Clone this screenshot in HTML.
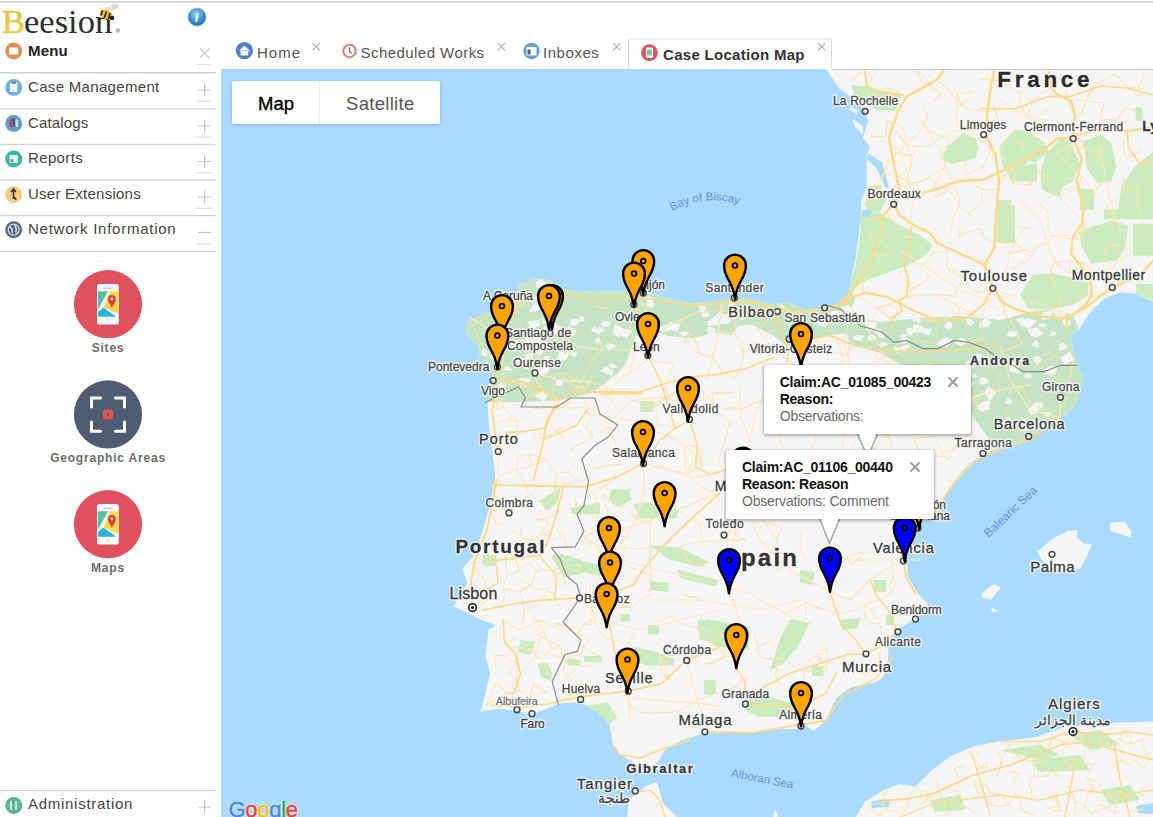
<!DOCTYPE html>
<html><head><meta charset="utf-8">
<style>
*{margin:0;padding:0;box-sizing:border-box}
html,body{width:1153px;height:817px;overflow:hidden;background:#fff;font-family:"Liberation Sans",sans-serif}
.abs{position:absolute}
#topline{left:0;top:1px;width:1153px;height:2px;background:#d8d8d8}
.mi{position:absolute;left:28px;color:#444;font-size:15px;letter-spacing:0.25px;white-space:nowrap}
.sep{position:absolute;left:0;width:216px;height:1px;background:#d2d2d2}
.ico{position:absolute;left:5px;width:17px;height:17px}
.pm{position:absolute;left:196px;width:16px;height:16px}
.ul{position:absolute;left:196px;width:16px;height:1px;background:#dcdcdc}
.tab{position:absolute;font-size:15px;color:#555;letter-spacing:0.3px;white-space:nowrap}
.blab{position:absolute;left:0;width:216px;text-align:center;font-size:12px;font-weight:bold;color:#6b6b6b;letter-spacing:0.8px}
#map{left:221px;top:69px;width:932px;height:748px;overflow:hidden;background:#aadaff}
.pop{position:absolute;background:#fff;border-radius:2px;box-shadow:0 1px 3px 1px rgba(0,0,0,.28);font-size:14px;line-height:17px;color:#222}
.pop b{font-weight:bold;color:#111;letter-spacing:-0.25px}
.pop .o{color:#6a6a6a;letter-spacing:-0.2px}
</style></head><body>
<div class="abs" id="topline"></div>

<!-- logo -->
<svg class="abs" style="left:0;top:0" width="130" height="40">
 <defs><linearGradient id="gb" x1="0" y1="0" x2="0" y2="1"><stop offset="0" stop-color="#e9b93a"/><stop offset="1" stop-color="#f7d634"/></linearGradient></defs>
 <text x="2" y="33.3" font-family="Liberation Serif" font-size="34.5" fill="url(#gb)" stroke="#e8c66a" stroke-width="0.6">B</text>
 <text x="24" y="33.3" font-family="Liberation Serif" font-size="34.5" fill="#2e2e2e">eesion</text>
 <circle cx="117.8" cy="30.4" r="2.3" fill="#bbb"/>
 <ellipse cx="112.5" cy="7.5" rx="6.5" ry="3" fill="#d8d8d8" transform="rotate(-20 112.5 7.5)"/>
 <ellipse cx="108" cy="9" rx="5" ry="2.5" fill="#e6e6e6" transform="rotate(-35 108 9)"/>
 <ellipse cx="106.5" cy="14.5" rx="7" ry="4.3" fill="#f2c21a" transform="rotate(28 106.5 14.5)"/>
 <path d="M102.5,10.5 L100.8,15.5 M106.5,11.5 L104.5,17.5 M110,13 L108.5,19" stroke="#222" stroke-width="1.7"/>
 <circle cx="112" cy="18" r="2.3" fill="#222"/>
</svg>
<svg class="abs" style="left:187px;top:7px" width="20" height="20">
 <defs><radialGradient id="gi" cx="0.45" cy="0.35" r="0.7"><stop offset="0" stop-color="#9fd0f5"/><stop offset="0.6" stop-color="#3b8bd0"/><stop offset="1" stop-color="#1f5f9c"/></radialGradient></defs>
 <circle cx="10" cy="10" r="9" fill="url(#gi)" stroke="#7fb0d8" stroke-width="0.8"/>
 <text x="8" y="15" font-size="12" font-style="italic" font-weight="bold" fill="#fff">i</text>
</svg>

<!-- sidebar -->
<svg class="abs" style="left:0;top:0" width="216" height="817">
 <!-- menu icon -->
 <circle cx="13.7" cy="51" r="8.5" fill="#e48f55"/><rect x="9.2" y="47.5" width="9" height="7" rx="1" fill="#fff"/>
 <circle cx="13.7" cy="87.5" r="8.5" fill="#6fafdf"/><rect x="10" y="82.5" width="7.4" height="9.5" rx="0.8" fill="#f3f3f3"/><rect x="11.5" y="81.8" width="4.4" height="2" fill="#8a7a66"/>
 <circle cx="13.7" cy="123.4" r="8.5" fill="#5d9fd6"/><rect x="9.5" y="119" width="2.6" height="8" fill="#c94040"/><rect x="12.5" y="118" width="2.6" height="9" fill="#3b5a8a"/><rect x="15.5" y="119.5" width="2.4" height="7.5" fill="#e8e0c0"/>
 <circle cx="13.7" cy="159" r="8.5" fill="#33bba0"/><rect x="9.5" y="155" width="8.4" height="8" fill="#e9f4f2"/><rect x="10.5" y="159" width="3" height="3" fill="#5aa0d0"/>
 <circle cx="13.7" cy="194.7" r="8.5" fill="#f5cd85"/><path d="M13.5,189 L13.5,199 M11,192 L13.5,189 L16,192 M13.5,196 L16,200" stroke="#3a3a3a" stroke-width="1.6" fill="none"/>
 <circle cx="13.7" cy="229.7" r="8.5" fill="#556680"/><circle cx="13.7" cy="229.7" r="5.5" fill="none" stroke="#dfe4ea" stroke-width="1.2"/><path d="M10,227 Q13,229 12,233 M15,225 Q17,229 16,233" stroke="#dfe4ea" stroke-width="1.5" fill="none"/>
 <circle cx="13.8" cy="805.4" r="8.5" fill="#5bb597"/><path d="M11,801 L11,810 M16,801 L16,810" stroke="#e6f3ee" stroke-width="1.5"/><rect x="9.8" y="804" width="2.4" height="2" fill="#e6f3ee"/><rect x="14.8" y="806" width="2.4" height="2" fill="#e6f3ee"/>

 <!-- x and + -->
 <g stroke="#c4c4c4" stroke-width="1.2" fill="none">
  <path d="M199.7,48.3 L209.5,58.1 M209.5,48.3 L199.7,58.1"/>
  <path d="M198,90 L211,90 M204.6,83.5 L204.6,96.5"/>
  <path d="M198,126 L211,126 M204.6,119.5 L204.6,132.5"/>
  <path d="M198,161.5 L211,161.5 M204.6,155 L204.6,168"/>
  <path d="M198,197 L211,197 M204.6,190.5 L204.6,203.5"/>
  <path d="M198,232.5 L211,232.5"/>
  <path d="M198,807 L211,807 M204.6,800.5 L204.6,813.5"/>
 </g>
 <g fill="#dedede">
  <rect x="196" y="64" width="16" height="1.2"/>
  <rect x="196" y="100.6" width="16" height="1.2"/>
  <rect x="196" y="136.4" width="16" height="1.2"/>
  <rect x="196" y="172" width="16" height="1.2"/>
  <rect x="196" y="207.6" width="16" height="1.2"/>
  <rect x="196" y="243.5" width="16" height="1.2"/>
 </g>
 <g fill="#d0d0d0">
  <rect x="0" y="72" width="216" height="1.6"/>
  <rect x="0" y="108.4" width="216" height="1.2"/>
  <rect x="0" y="143.8" width="216" height="1.2"/>
  <rect x="0" y="179.5" width="216" height="1.2"/>
  <rect x="0" y="215" width="216" height="1.2"/>
  <rect x="0" y="250.8" width="216" height="1.2"/>
  <rect x="0" y="790" width="216" height="1.2"/>
 </g>
 <!-- big icons -->
 <circle cx="108" cy="304.2" r="34.1" fill="#e0515f"/>
 <rect x="97" y="284.1" width="21.8" height="40.5" rx="2.6" fill="#fff"/>
 <rect x="103" y="287.6" width="10" height="1.4" rx="0.7" fill="#ccc"/>
 <polygon points="97.9,291.2 108.1,291.2 97.9,309.7" fill="#4fc0a6"/>
 <polygon points="109.8,291.2 118.4,291.2 118.4,314 103.7,307.5" fill="#fbdb52"/>
 <polygon points="97.9,316.7 116.4,316.7 103.3,307.6 97.9,312" fill="#2eb3d3"/>
 <path d="M111.9,308 C110.5,304.5 108,302.5 108,299 A3.9,3.9 0 1 1 115.8,299 C115.8,302.5 113.3,304.5 111.9,308Z" fill="#e23b3b"/>
 <circle cx="111.9" cy="299" r="1.4" fill="#fff"/>
 <circle cx="107.7" cy="320.4" r="1.8" fill="none" stroke="#bbb" stroke-width="0.7"/>

 <circle cx="108" cy="414.4" r="34.1" fill="#4f5d73"/>
 <g stroke="#fff" stroke-width="3" fill="none" stroke-linecap="round">
  <path d="M91.5,407 L91.5,398 L100.5,398"/>
  <path d="M115.5,398 L124.5,398 L124.5,407"/>
  <path d="M91.5,422 L91.5,431.2 L100.5,431.2"/>
  <path d="M115.5,431.2 L124.5,431.2 L124.5,422"/>
 </g>
 <rect x="103" y="409.6" width="10" height="10" rx="1.5" fill="#e05555"/>
 <circle cx="108" cy="414.6" r="1.3" fill="#4f5d73"/>

 <circle cx="108" cy="524.2" r="34.1" fill="#e0515f"/>
 <rect x="97" y="504.1" width="21.8" height="40.5" rx="2.6" fill="#fff"/>
 <rect x="103" y="507.6" width="10" height="1.4" rx="0.7" fill="#ccc"/>
 <polygon points="97.9,511.2 108.1,511.2 97.9,529.7" fill="#4fc0a6"/>
 <polygon points="109.8,511.2 118.4,511.2 118.4,534 103.7,527.5" fill="#fbdb52"/>
 <polygon points="97.9,536.7 116.4,536.7 103.3,527.6 97.9,532" fill="#2eb3d3"/>
 <path d="M111.9,528 C110.5,524.5 108,522.5 108,519 A3.9,3.9 0 1 1 115.8,519 C115.8,522.5 113.3,524.5 111.9,528Z" fill="#e23b3b"/>
 <circle cx="111.9" cy="519" r="1.4" fill="#fff"/>
 <circle cx="107.7" cy="540.4" r="1.8" fill="none" stroke="#bbb" stroke-width="0.7"/>
</svg>
<div class="mi" style="top:42px;font-weight:bold;color:#222;letter-spacing:0.2px">Menu</div>
<div class="mi" style="top:77.5px;letter-spacing:0.32px">Case Management</div>
<div class="mi" style="top:113.5px;letter-spacing:0.15px">Catalogs</div>
<div class="mi" style="top:148.5px;letter-spacing:0.36px">Reports</div>
<div class="mi" style="top:184.5px;letter-spacing:0.25px">User Extensions</div>
<div class="mi" style="top:219.5px;letter-spacing:0.75px">Network Information</div>
<div class="mi" style="top:794.5px;letter-spacing:0.72px">Administration</div>
<div class="blab" style="top:341px">Sites</div>
<div class="blab" style="top:451px">Geographic Areas</div>
<div class="blab" style="top:561px">Maps</div>

<!-- tabs -->
<svg class="abs" style="left:221px;top:30px" width="932" height="40">
 <circle cx="23.4" cy="20.7" r="8.6" fill="#4f7fcf"/><path d="M18.5,21 L23.4,16 L28.3,21 M20,20.5 L20,25 L26.8,25 L26.8,20.5" fill="#fff" stroke="#fff" stroke-width="1"/>
 <circle cx="128.5" cy="21" r="8.2" fill="#e3ddd0"/><circle cx="128.5" cy="21" r="6" fill="#fff" stroke="#d5766a" stroke-width="1.6"/><path d="M128.5,17.5 L128.5,21 L130.5,23.5" stroke="#555" stroke-width="1.2" fill="none"/>
 <circle cx="310.5" cy="21" r="8.2" fill="#5fa0d6"/><rect x="305.5" y="17" width="10" height="8.5" fill="#fff"/><rect x="306.5" y="19.5" width="3" height="5" fill="#556"/>
 <rect x="407.5" y="9" width="203" height="32" fill="#fff" stroke="#dadada" stroke-width="1"/>
 <circle cx="428.5" cy="22.7" r="8.4" fill="#e0515f"/><rect x="425" y="17.5" width="7" height="10.5" rx="1" fill="#fff"/><rect x="426" y="19.5" width="5" height="6" fill="#7cc6a0"/>
 <g stroke="#b5b5b5" stroke-width="1.1">
  <path d="M91.5,13 L99,20.5 M99,13 L91.5,20.5"/>
  <path d="M276.5,13 L284,20.5 M284,13 L276.5,20.5"/>
  <path d="M392,13 L399.5,20.5 M399.5,13 L392,20.5"/>
  <path d="M597,13 L604.5,20.5 M604.5,13 L597,20.5"/>
 </g>
</svg>
<div class="tab" style="left:257px;top:44px;letter-spacing:1px">Home</div>
<div class="tab" style="left:360.5px;top:44px;letter-spacing:0.45px">Scheduled Works</div>
<div class="tab" style="left:543px;top:44px;letter-spacing:0.55px">Inboxes</div>
<div class="tab" style="left:663px;top:45.5px;font-weight:bold;color:#333;letter-spacing:0.3px">Case Location Map</div>

<!-- map -->
<div class="abs" id="map">
<svg width="932" height="748" viewBox="221 69 932 748" style="position:absolute;left:0;top:0">
<rect x="221" y="69" width="932" height="748" fill="#aadaff"/>
<g fill="#f5f5f5">
<polygon points="826,69 1153,69 1153,301.8 1136,293.8 1120.2,292.2 1104.3,298.6 1088.4,314.5 1079,330 1071,334 1072.5,349 1077.6,366 1083,377 1080,392 1074,408 1060,418 1046,427 1027,439 1003,446 979.5,456 963,470 948,490 937,512 922,523 917,534 909,548 907,560 908,577 918,594 927.8,603.7 923,613.5 908,623 896,631 888.6,645 888,662 883,677 876.3,682 851.8,687 837,697.5 829.8,711.4 825.4,721 813.6,730.8 804,725 798,729 778.4,729 751,732.8 724.6,731 700,734.7 681,740.5 665,750 658.6,761 646,773.7 633.7,762.8 621,755 613,745.6 609.5,724.5 600,711.8 587.2,705.4 574.5,702.2 558.6,703.8 547.5,708.6 531.6,715 517.3,711 499.8,708.6 480.7,711.8 483.9,699 490.2,673.6 485.4,656 488.6,629 493.4,627.5 495,624.3 483.9,621 462.3,610.2 453.7,606.8 457.1,600 467.4,582.8 462.3,569 472.5,557 482.8,531.4 489.7,505.7 494.8,480 495,473 492,449 488.7,424 487.5,400 491,383 491,371 488,363 479,356 479,347 472.6,340.6 465.7,332 467.4,321.7 481,315 496.6,309.7 512,299.4 520,284 533.5,279.3 546,279.3 554.3,281.9 564.8,290.2 582.4,291.2 613.7,290.7 643,291.5 690,303.6 717.8,300.8 734.4,298 748.3,298 773.3,304.3 787,302.2 803.8,309 824.6,309 842.6,302.2 850,291 849.5,287.5 856,255.7 860.7,219 861.5,200 866.6,186.4 866.6,155.3 870,146.7 863,138 868.3,120.8 862,108 854,100 838,87"/>
<polygon points="627,817 629,799 637,794 646,786 657,782 660,792 663,803 677,817"/>
<polygon points="856,817 865,801.5 882,791 899,784 915.5,786.6 932,770 951,756 975,746 998,741.6 1036,737 1065,727 1093,725 1117,722.6 1153,721.4 1153,817"/>
<polygon points="1037,551.4 1054,537.7 1068,530.9 1078,530 1076.6,537.7 1083.4,542.9 1092,544.6 1086.8,556.6 1080,568.6 1066,572 1045.7,565 1040.6,558"/>
<polygon points="1110,523 1124.5,521.4 1131,531 1131,537.7 1121,534 1110,531"/>
<polygon points="982,592.6 994,584 1001,587.4 991,599.4 982,597.7"/>
<polygon points="991,607 998,611 992,612"/>
<polygon points="773,817 775,809 778,817"/>
<polygon points="850.5,107 858,110 857,114 849,110"/>
<polygon points="852.8,119 863,126 863,134.6 854.5,126"/>
</g>
<g fill="#c5e4c4">
<polygon points="487.5,400 491,383 491,371 488,363 479,356 479,347 472.6,340.6 465.7,332 467.4,321.7 481,315 496.6,309.7 512,299.4 520,284 533.5,279.3 546,279.3 554.3,281.9 564.8,290.2 582.4,291.2 613.7,290.7 643,291.5 690,303.6 717.8,300.8 734.4,298 748.3,298 773.3,304.3 787,302.2 803.8,309 824.6,309 842.6,302.2 850,291 849.5,287.5 855,298 848,320 850,332.7 828.8,335.5 815,338.3 787,346.6 773.3,335.5 762.2,330 752.4,324.4 738.6,325.8 731.6,335.5 717.8,332.7 690,338.3 669,336 647,329.5 636,336 625,365 614,376 592,393 559,400 526,402 482,402"/>
<polygon points="842,315 860,318 880,322 920,318 960,316 1000,320 1030,312 1047,309.7 1072.5,314.5 1079,330 1071,334 1072.5,349 1077.6,366 1083,377 1080,392 1074,408 1060,418 1046,427 1027,439 1003,446 990,440 975,420 962,398 950,372 900,364 880,353 850,345"/>
</g>
<g fill="#caebbe">
<polygon points="860.7,211 879.8,212.7 894,222.3 903.6,227 919.5,235 932.2,244.5 929,252.5 916.3,260.4 895.7,270 871.8,278 855.9,286 849.5,295.4 846.4,298.6 856,263.6 860.7,231.8"/>
<polygon points="866.6,186.4 880.4,184.6 885.6,200.2 880,212 866,212"/>
<polygon points="851,84.5 864.9,86.3 885.6,91.4 901,96.6 896,110.4 877,110.4 854.5,94.9"/>
<polygon points="947.7,146.7 963.3,132.9 975.3,138 978.8,148.4 975.3,158.7 951.2,164 940.8,158.7"/>
<polygon points="999,146.7 1014.5,129.4 1028.3,131.2 1043.9,141.5 1049,151.9 1035.2,162.2 1028.3,160.5 1014.5,179.5 1014.5,184.7 1002.4,165.7"/>
<polygon points="1045.6,155.3 1061,138 1069.8,141.5 1080,164 1073.2,181.2 1062.9,186.4 1059.4,196.8 1042,189.9 1040.4,172.6"/>
<polygon points="1014.5,169.1 1037,162.2 1037,181.2 1014.5,181.2"/>
<polygon points="1083.6,141.5 1100.9,134.6 1111.2,143.2 1116.4,165.7 1111.2,181.2 1097.4,183 1087,169.1"/>
<polygon points="1135.4,165.7 1153,151.9 1153,210 1118,210 1121.6,186.4"/>
<polygon points="1135.4,107 1142.3,107 1142.3,120.8 1136,120.8"/>
<polygon points="1080,188 1094,190 1094,210 1080,210"/>
<polygon points="997,200 1011,200 1011,210 997,210"/>
<polygon points="996,205 1015,205 1015,243 996,243"/>
<polygon points="1078.9,231.8 1094.8,225.4 1113.9,220.7 1128.2,225.4 1125,247.7 1117,260.4 1091.6,263.6 1082,247.7"/>
<polygon points="1104,209.5 1153,209.5 1153,219 1104,219"/>
<polygon points="1133,223.9 1153,223.9 1153,255.7 1133,255.7"/>
<polygon points="1032.8,274.8 1053.4,273.2 1088.4,282.7 1088.4,295.4 1072.5,305 1047,309.7 1028,308 1020,295.4"/>
<polygon points="1136,284 1153,284 1153,301 1136,293.8"/>
<polygon points="611,489.2 629.4,489.2 631.2,500.2 618.4,507.6 609.2,500.2"/>
<polygon points="633,504 650,502 679,510 676,518.6 640,518"/>
<polygon points="640.4,401 653.3,401 653.3,412 640.4,412"/>
<polygon points="539.4,500.6 560,488.6 558.2,502.3 546.2,510.8"/>
<polygon points="482.8,553.7 496.5,556 496.5,565.7 482.8,565.7"/>
<polygon points="551.3,555.4 560,553.7 600,565.7 600,576 585.6,572.5 563.3,577.6"/>
<polygon points="570,507.4 600,503 600,514.3 572,514.3"/>
<polygon points="649,545 680,548 709,562 700,567 670,560"/>
<polygon points="560,561 579,566 575,574 560,572"/>
<polygon points="650,581 668.4,583 668.4,592 650,590"/>
<polygon points="677.6,570 718,580 716,586.5 680,578"/>
<polygon points="633.5,647 651.8,650.8 673.9,658.2 673.9,665.5 646.3,665.5 637,661.8"/>
<polygon points="648.2,625 659.2,625 659.2,634.3 648.2,634.3"/>
<polygon points="699.6,617.8 720,635 720,647 705,640"/>
<polygon points="705,680 714,680 714,695 705,695"/>
<polygon points="620.6,614 629.8,614 629.8,621.4 620.6,621.4"/>
<polygon points="567.3,658 580.2,660 580.2,665.5 567.3,665.5"/>
<polygon points="583.9,656.3 602.2,656.3 602.2,661.8 583.9,661.8"/>
<polygon points="705.9,619.2 749,627 749,648.6 715.7,646.6 708,636"/>
<polygon points="809.7,623 790,619.2 778.4,642.7 770.5,670 782.3,664.2 798,646.6"/>
<polygon points="745,699.5 770,697 798,705 795,717 760,717 745,710"/>
<polygon points="811.7,666.2 823.4,666.2 823.4,676 811.7,676"/>
<polygon points="704,680 715.7,680 715.7,693.6 704,693.6"/>
<polygon points="874,580 886,580 886,591.8 874,591.8"/>
<polygon points="886,615 894,615 894,625 886,625"/>
<polygon points="537.9,664 547.5,662.5 552.2,673.6 550.6,681.6 541,676.8"/>
<polygon points="569.7,661 581,661 581,664 569.7,664"/>
<polygon points="587,656 600,656 600,661 587,661"/>
<polygon points="587.2,705.4 608,702.2 617.5,718 609,724 596,712"/>
<polygon points="697,620 725,622 720,643 700,640"/>
<polygon points="840,620 860,618 858,628 842,630"/>
<polygon points="800,570 815,572 812,585 800,583"/>
<polygon points="520,640 535,642 530,655 518,652"/>
<polygon points="1000,750 1040,745 1060,755 1040,760"/>
<polygon points="1030,760 1080,755 1090,770 1040,772"/>
<polygon points="1070,735 1100,730 1120,745 1090,750"/>
<polygon points="1100,790 1130,785 1140,800 1110,805"/>
<polygon points="930,800 960,795 965,810 935,812"/>
</g>
<g fill="#f5f5f5">
<polygon points="541.2,343.3 532.1,345.6 528.8,340.7 543.5,339.2"/>
<polygon points="744.0,318.5 742.7,320.2 739.5,319.2 739.4,316.1 743.2,316.8"/>
<polygon points="609.7,363.7 611.7,363.1 618.3,366.9 615.4,367.7 612.0,368.6 608.1,366.3"/>
<polygon points="683.6,331.6 688.6,332.2 688.7,335.1 681.3,337.0 681.1,334.2 678.0,332.6"/>
<polygon points="543.9,359.8 543.8,356.4 547.9,355.9 550.9,356.0 547.6,359.2"/>
<polygon points="536.0,365.1 543.1,367.8 544.8,374.3 531.7,373.9"/>
<polygon points="618.0,337.5 612.7,332.5 615.1,324.0 623.3,328.5 621.6,334.2"/>
<polygon points="539.8,325.7 531.2,329.2 527.3,321.2 539.3,319.8"/>
<polygon points="655.0,324.0 649.3,325.8 648.0,322.1 651.5,319.1"/>
<polygon points="827.2,317.9 825.4,326.8 817.4,325.2 817.0,318.7"/>
<polygon points="494.7,350.9 504.1,355.7 499.4,361.0 493.9,360.4 489.2,356.3"/>
<polygon points="551.1,360.4 556.7,362.4 561.1,365.2 557.1,368.2 551.2,367.7 550.3,365.9"/>
<polygon points="568.4,353.0 567.1,359.3 556.5,361.7 559.3,351.7"/>
<polygon points="830.4,312.7 833.3,310.8 839.3,311.1 838.9,315.4 835.6,317.0"/>
<polygon points="566.0,352.2 572.8,350.8 577.7,353.2 575.2,357.3 572.2,356.3"/>
<polygon points="732.0,299.7 735.6,302.1 732.2,307.9 726.7,303.2"/>
<polygon points="558.9,333.9 547.8,333.0 542.9,327.9 554.1,322.1 560.6,326.9"/>
<polygon points="549.5,365.1 549.6,369.4 546.6,375.2 539.8,368.4 542.4,365.9 545.7,364.8"/>
<polygon points="598.5,334.0 594.9,332.8 598.5,326.6 605.3,330.0"/>
<polygon points="526.8,349.3 524.4,340.8 530.1,334.6 536.7,339.4 536.8,344.9"/>
<polygon points="671.2,330.0 662.8,332.6 657.5,328.1 662.3,325.9 668.0,324.2 676.5,328.7"/>
<polygon points="509.0,331.9 507.4,332.5 505.4,330.1 507.1,328.2 510.9,328.8"/>
<polygon points="513.5,340.1 519.1,341.1 514.5,345.1 509.0,342.0"/>
<polygon points="553.8,301.2 558.1,308.0 553.2,308.9 547.0,307.5 543.9,302.9 547.9,303.3"/>
<polygon points="746.1,310.3 748.8,307.9 751.6,309.4 751.9,313.5 746.6,313.9"/>
<polygon points="714.2,318.2 720.5,324.7 707.9,326.0 707.4,321.1"/>
<polygon points="539.1,299.8 532.6,302.7 529.2,300.4 529.3,296.9 533.3,296.9 538.6,297.5"/>
<polygon points="540.3,333.7 539.4,338.5 535.2,341.4 527.8,332.2 537.5,329.9"/>
<polygon points="540.8,355.2 533.8,352.9 537.3,348.8 543.3,349.0 543.2,352.1"/>
<polygon points="541.0,304.5 543.1,296.7 551.3,295.8 551.4,304.3 544.4,307.3"/>
<polygon points="677.0,331.7 669.1,329.6 667.0,327.2 671.0,321.5 681.1,323.7 679.6,326.6"/>
<polygon points="581.4,320.2 576.0,326.0 570.6,325.3 570.2,319.7 574.8,318.5"/>
<polygon points="644.6,298.0 648.9,296.4 654.2,297.7 653.1,301.8 646.7,304.3 646.2,300.6"/>
<polygon points="715.7,328.2 714.5,335.8 707.2,334.8 707.9,325.9"/>
<polygon points="849.9,304.8 851.2,310.5 846.7,312.7 839.7,313.4 840.8,308.2 843.9,306.4"/>
<polygon points="612.9,370.1 613.0,376.3 599.4,371.0 605.1,366.8"/>
<polygon points="573.8,336.7 566.8,331.0 567.8,325.5 576.6,330.7"/>
<polygon points="598.8,336.6 601.3,341.9 596.1,343.2 594.8,339.5"/>
<polygon points="518.0,379.0 525.1,378.0 532.0,378.4 528.7,383.5 521.7,385.3"/>
<polygon points="727.5,320.2 726.4,313.4 735.8,312.4 736.6,318.4"/>
<polygon points="719.4,312.0 731.9,317.8 729.5,323.6 720.2,323.9 710.9,319.6"/>
<polygon points="602.2,321.2 607.0,321.0 611.5,322.8 608.5,325.9 601.8,327.4"/>
<polygon points="779.0,304.5 783.1,305.3 785.6,307.8 781.6,308.0"/>
<polygon points="500.3,354.0 503.9,356.7 501.3,359.0 497.2,360.5 496.1,357.6 495.7,354.3"/>
<polygon points="493.2,357.2 490.7,355.7 493.2,353.9 494.8,354.0 498.5,354.4 494.2,357.0"/>
<polygon points="530.7,360.8 525.0,357.9 525.1,355.7 532.5,352.0 532.8,356.6"/>
<polygon points="541.2,308.1 545.5,302.6 556.3,305.0 556.8,310.2 551.6,312.9 545.8,314.1"/>
<polygon points="506.3,384.8 503.3,388.7 495.2,387.7 500.9,382.4"/>
<polygon points="530.0,297.8 530.3,301.4 525.9,300.5 523.5,298.3 523.8,294.5"/>
<polygon points="521.3,292.1 528.7,291.6 529.7,296.8 526.0,299.2 519.0,298.5 517.4,295.1"/>
<polygon points="551.7,346.1 549.3,350.0 540.2,345.7 544.6,344.0"/>
<polygon points="527.9,361.5 525.7,363.0 518.1,364.4 514.2,361.9 511.9,358.3 523.0,358.3"/>
<polygon points="707.7,310.8 708.4,313.9 709.9,315.8 706.8,317.8 701.8,317.2 701.7,312.9"/>
<polygon points="544.5,284.7 542.2,287.2 535.8,287.7 536.1,281.9 542.0,279.0 545.7,283.0"/>
<polygon points="591.3,328.3 595.6,326.6 597.2,330.1 596.0,331.6 591.9,331.2"/>
<polygon points="540.2,318.4 549.6,318.3 549.3,321.9 543.3,323.7"/>
<polygon points="541.7,390.9 547.8,395.6 543.8,401.2 534.0,395.4"/>
<polygon points="550.7,348.1 563.9,345.3 562.1,350.4 555.7,351.9"/>
<polygon points="533.4,347.8 537.4,344.8 542.2,345.2 539.0,349.2"/>
<polygon points="525.6,330.9 525.0,329.2 527.0,327.9 529.0,329.1 529.4,330.6 526.8,332.4"/>
<polygon points="622.2,336.0 617.4,334.8 620.6,328.9 627.3,329.1 632.4,331.7 626.8,338.1"/>
<polygon points="563.6,382.5 561.6,386.1 556.1,385.6 556.2,379.8 562.7,379.0"/>
<polygon points="609.1,350.8 605.4,345.9 609.5,343.5 617.6,345.4"/>
<polygon points="583.2,317.1 584.2,319.4 584.8,321.9 579.5,320.7 579.8,316.1"/>
<polygon points="653.5,301.3 654.0,305.5 652.1,308.7 646.4,305.3 646.7,303.5 650.2,302.7"/>
<polygon points="509.5,367.0 512.5,371.0 506.8,370.5 503.4,369.5 505.9,366.0"/>
<polygon points="529.3,312.1 531.9,306.4 536.0,301.8 541.4,308.0 537.7,310.9"/>
<polygon points="480.4,353.8 482.0,350.7 484.5,349.0 489.0,351.9 486.0,356.9"/>
<polygon points="812.6,318.1 821.3,314.7 823.4,319.9 818.6,321.3"/>
<polygon points="704.3,305.5 706.4,307.9 704.2,311.8 699.7,311.9 698.1,305.5"/>
<polygon points="1050.0,332.0 1056.3,331.8 1054.8,334.8 1050.6,337.1"/>
<polygon points="981.6,411.9 975.9,406.0 983.0,403.4 989.7,408.4"/>
<polygon points="881.5,342.1 884.6,341.8 888.0,344.8 883.9,346.3 880.7,346.8 878.8,345.6"/>
<polygon points="966.3,324.0 965.8,317.3 971.4,319.6 974.9,322.0 970.7,326.0"/>
<polygon points="1069.1,362.6 1061.2,360.7 1060.6,357.6 1067.4,354.6 1070.3,355.5 1069.5,360.9"/>
<polygon points="935.3,344.4 943.4,338.3 950.7,342.5 945.5,348.0"/>
<polygon points="971.2,368.0 969.6,366.6 972.2,363.5 974.9,366.7 973.7,368.2"/>
<polygon points="1070.3,351.7 1074.1,360.2 1069.0,363.1 1064.4,365.0 1062.0,358.0 1065.0,354.2"/>
<polygon points="866.6,338.2 871.3,333.8 876.3,337.6 876.1,340.0 869.5,340.6"/>
<polygon points="898.9,353.4 894.4,350.8 893.7,345.7 899.0,348.4"/>
<polygon points="1051.3,385.8 1048.1,388.0 1043.4,386.8 1044.9,383.2"/>
<polygon points="909.4,326.9 915.6,330.5 910.7,335.9 906.7,333.5 906.2,329.3"/>
<polygon points="1058.7,351.1 1059.4,347.9 1058.5,344.7 1062.9,342.2 1067.6,347.2 1065.1,348.9"/>
<polygon points="1060.1,308.8 1064.5,314.2 1058.8,320.1 1052.9,312.1"/>
<polygon points="1060.7,317.5 1058.2,317.0 1058.5,313.9 1060.9,312.1 1066.7,314.7 1065.1,315.7"/>
<polygon points="1050.4,412.3 1048.9,414.2 1049.1,416.7 1044.8,415.9 1044.0,413.9 1045.2,412.1"/>
<polygon points="1006.2,422.5 1004.7,420.2 1006.4,417.4 1010.5,418.0 1010.9,419.8"/>
<polygon points="1029.3,373.2 1032.6,376.8 1027.9,378.6 1023.7,376.5 1026.0,373.3"/>
<polygon points="1029.9,424.6 1027.5,428.3 1024.2,428.4 1019.0,424.6 1019.9,418.1 1028.3,418.9"/>
<polygon points="900.5,348.0 901.3,346.5 905.5,345.0 910.2,343.9 908.7,348.1 907.3,348.4"/>
<polygon points="967.1,375.9 968.0,372.9 974.4,373.4 978.3,376.8 974.0,378.3"/>
<polygon points="1056.8,367.0 1056.7,371.4 1053.0,375.3 1044.6,373.8 1045.8,368.3 1051.4,365.4"/>
<polygon points="919.2,324.1 915.4,321.9 912.3,320.0 916.5,318.2 921.6,319.3"/>
<polygon points="908.8,335.0 902.4,337.7 899.9,336.4 901.9,333.5"/>
<polygon points="1037.7,405.9 1039.7,408.1 1036.6,413.4 1031.0,414.8 1027.9,411.5 1029.7,407.6"/>
<polygon points="1037.1,364.6 1032.4,358.9 1035.3,356.5 1040.0,357.0 1041.4,361.2"/>
<polygon points="922.3,333.6 923.7,328.3 932.2,328.9 929.9,334.7"/>
<polygon points="1006.5,335.4 1008.3,332.1 1009.3,330.6 1017.4,331.6 1017.2,333.9 1013.4,336.9"/>
<polygon points="1019.9,373.2 1009.1,371.7 1010.1,362.6 1019.3,362.8"/>
<polygon points="967.4,369.4 972.8,367.3 972.0,373.2 964.7,374.6"/>
<polygon points="960.2,338.1 965.1,339.3 964.8,343.7 961.1,346.1 954.2,342.8 956.7,340.1"/>
<polygon points="1027.3,427.5 1027.9,431.2 1025.2,431.3 1022.8,430.0 1021.4,426.7"/>
<polygon points="1046.7,326.6 1043.3,327.5 1039.0,326.6 1038.5,323.1 1046.3,323.8"/>
<polygon points="1034.8,402.4 1042.9,402.7 1042.8,406.4 1039.5,409.2 1031.2,407.3"/>
<polygon points="858.1,334.7 864.2,336.1 860.8,341.3 856.6,340.6 851.8,337.2"/>
<polygon points="865.3,319.9 878.2,323.0 873.0,331.3 865.5,330.1"/>
<polygon points="1005.1,404.0 1006.2,400.4 1008.5,397.2 1012.3,401.4 1010.9,404.1"/>
<polygon points="980.6,402.2 990.1,400.6 988.9,410.4 980.3,408.1"/>
<polygon points="951.7,339.6 947.1,345.8 938.3,342.5 945.2,337.4"/>
<polygon points="1020.2,317.2 1025.0,318.4 1026.1,321.7 1021.8,322.9 1018.8,323.2 1016.0,319.4"/>
<polygon points="1032.7,325.5 1029.7,328.4 1019.8,325.6 1022.7,319.6 1028.5,318.2 1037.3,320.7"/>
<polygon points="971.9,364.4 975.4,368.0 965.1,369.8 962.9,367.3 964.8,363.9 969.7,358.9"/>
<polygon points="996.7,427.7 993.9,425.0 997.0,423.5 1000.4,424.6 1001.5,426.4"/>
<polygon points="1064.0,319.1 1071.0,321.1 1069.7,325.9 1063.5,325.3 1062.1,321.6"/>
<polygon points="968.3,382.3 975.2,381.5 971.6,387.7 964.8,385.3"/>
<polygon points="991.7,322.2 988.4,327.1 980.0,327.6 978.6,322.9 985.6,318.2"/>
<polygon points="858.1,319.7 857.6,322.2 855.4,324.3 852.2,323.8 852.5,321.5"/>
<polygon points="880.3,332.0 877.3,334.3 872.9,330.7 872.8,328.4 881.8,328.7"/>
<polygon points="948.1,321.0 951.7,322.7 952.1,327.9 948.5,329.7 944.6,326.9 944.9,324.4"/>
<polygon points="923.3,326.4 925.4,332.1 911.5,333.6 913.5,324.2"/>
<polygon points="979.0,378.3 983.0,376.4 987.3,379.3 989.4,382.7 984.9,383.9 979.9,384.4"/>
<polygon points="1031.1,345.5 1035.2,340.2 1039.3,343.1 1038.6,347.5"/>
<polygon points="1049.8,318.4 1042.2,320.6 1040.8,315.1 1043.0,312.1 1053.0,310.4 1051.9,315.1"/>
<polygon points="878.7,332.1 884.1,334.5 884.5,338.2 881.1,337.8 877.6,336.9"/>
<polygon points="903.8,351.4 897.2,348.3 902.3,346.8 907.5,350.7"/>
<polygon points="1040.1,330.8 1044.3,333.1 1035.7,338.1 1029.9,335.0 1027.3,329.4 1037.4,327.2"/>
<polygon points="980.9,360.3 979.4,361.4 974.8,359.3 972.7,355.6 978.5,353.1 982.2,354.9"/>
<polygon points="999.1,425.0 1002.5,421.3 1014.7,421.8 1011.0,428.0 1009.8,429.4 1003.8,428.0"/>
<polygon points="909.8,340.5 902.9,344.0 899.9,341.2 903.3,335.9"/>
<polygon points="988.0,385.7 996.0,392.4 990.1,401.3 984.3,393.1"/>
</g>
<g fill="#aadaff">
<polygon points="871,801 890,799 889,807 872,808"/>
<polygon points="1136,806 1153,803 1153,814 1138,813"/>
<polygon points="868.3,153.6 882,162.2 889,188 885.6,188 877,169 866.6,158.7"/>
<polygon points="862,209.5 872,211 870,217.5 862,216"/>
</g>
<path fill="none" stroke="#fbe4ac" stroke-width="0.9" d="M852.3,79.5 Q857.1,77.3 862.1,70.2 M862.1,70.2 Q858.1,73.8 852.3,79.5 M869.1,84.0 Q872.9,75.9 876.9,71.6 M867.7,96.3 Q867.5,88.1 869.1,84.0 M867.7,96.3 Q877.8,90.6 888.0,87.1 M869.8,135.9 Q879.1,138.5 885.2,136.3 M871.5,191.0 Q876.9,190.5 877.3,191.1 M871.5,191.0 Q869.5,196.4 863.1,206.1 M871.5,191.0 Q875.5,183.5 883.6,173.5 M863.1,206.1 Q869.6,196.7 871.5,191.0 M863.1,206.1 Q871.8,198.7 877.3,191.1 M867.4,227.7 Q870.0,230.4 870.5,235.8 M870.5,235.8 Q874.6,241.0 882.3,241.6 M870.5,235.8 Q873.4,242.5 874.3,250.2 M874.3,250.2 Q875.1,252.2 876.7,255.4 M874.3,250.2 Q876.4,245.0 882.3,241.6 M865.7,276.9 Q865.4,281.4 861.7,289.8 M865.7,276.9 Q874.5,273.1 878.9,267.1 M861.7,289.8 Q862.5,281.2 865.7,276.9 M861.7,289.8 Q868.9,293.9 877.3,294.1 M888.0,87.1 Q895.0,91.2 899.3,91.7 M888.0,87.1 Q887.8,91.3 889.7,100.2 M888.0,87.1 Q892.1,95.4 894.6,102.2 M889.7,100.2 Q890.9,100.0 894.6,102.2 M889.7,100.2 Q894.6,94.3 899.3,91.7 M887.0,121.4 Q885.7,126.5 885.2,136.3 M887.0,121.4 Q895.7,123.1 901.8,125.9 M885.2,136.3 Q887.2,126.6 887.0,121.4 M885.2,136.3 Q877.2,137.4 869.8,135.9 M889.2,160.8 Q893.3,158.9 897.6,152.7 M889.2,160.8 Q884.7,166.7 883.6,173.5 M883.6,173.5 Q885.4,168.4 889.2,160.8 M883.6,173.5 Q893.7,174.0 898.8,176.9 M877.3,191.1 Q880.7,181.8 883.6,173.5 M886.3,212.5 Q888.3,213.5 888.9,218.7 M886.3,212.5 Q891.6,218.7 896.9,221.8 M888.9,218.7 Q892.1,221.6 896.9,221.8 M876.7,255.4 Q874.6,252.1 874.3,250.2 M876.7,255.4 Q879.4,259.8 878.9,267.1 M878.9,267.1 Q877.4,260.8 876.7,255.4 M894.6,102.2 Q897.0,97.6 899.3,91.7 M901.8,125.9 Q905.8,133.6 905.9,142.6 M905.9,142.6 Q910.8,138.1 916.4,135.5 M905.9,142.6 Q904.1,145.7 897.6,152.7 M905.9,142.6 Q908.5,150.7 911.9,156.1 M897.6,152.7 Q893.4,154.6 889.2,160.8 M897.6,152.7 Q903.9,149.8 905.9,142.6 M897.6,152.7 Q904.9,154.2 911.9,156.1 M898.8,176.9 Q902.1,177.8 908.0,182.7 M898.8,176.9 Q906.3,180.8 913.5,182.8 M908.0,182.7 Q908.7,184.2 913.5,182.8 M908.0,182.7 Q909.9,190.8 915.6,198.2 M896.0,200.9 Q890.1,204.8 886.3,212.5 M896.9,221.8 Q892.6,221.6 888.9,218.7 M902.4,235.4 Q907.3,236.6 911.9,236.9 M893.4,254.8 Q882.5,255.3 876.7,255.4 M893.4,254.8 Q886.7,247.2 882.3,241.6 M899.0,274.0 Q904.7,266.5 910.7,261.7 M907.9,292.9 Q912.1,289.3 914.2,287.7 M907.9,292.9 Q918.9,285.9 929.9,277.2 M918.2,70.8 Q917.3,73.6 920.7,79.2 M918.2,70.8 Q928.6,82.1 940.3,93.5 M920.7,79.2 Q918.8,74.5 918.2,70.8 M920.7,79.2 Q928.0,85.3 940.3,93.5 M924.1,107.3 Q924.9,113.0 928.7,113.9 M923.7,124.6 Q927.6,117.7 928.7,113.9 M923.7,124.6 Q928.0,127.8 932.6,133.4 M916.4,135.5 Q920.7,130.6 923.7,124.6 M911.9,156.1 Q902.5,154.9 897.6,152.7 M911.3,164.4 Q909.3,157.8 911.9,156.1 M911.3,164.4 Q904.6,171.7 898.8,176.9 M913.5,182.8 Q912.7,183.9 908.0,182.7 M913.5,182.8 Q923.2,182.6 927.7,177.9 M913.5,182.8 Q913.7,188.9 915.6,198.2 M915.6,198.2 Q911.2,189.8 908.0,182.7 M910.4,216.7 Q910.8,205.3 915.6,198.2 M911.9,236.9 Q905.2,238.5 902.4,235.4 M910.7,261.7 Q916.9,264.3 919.7,267.6 M919.7,267.6 Q925.0,272.1 929.9,277.2 M919.7,267.6 Q924.6,262.0 931.3,254.0 M914.2,287.7 Q921.6,284.0 929.9,277.2 M914.2,287.7 Q904.3,278.5 899.0,274.0 M940.3,93.5 Q935.2,96.6 934.5,102.8 M934.5,102.8 Q939.4,97.3 940.3,93.5 M928.7,113.9 Q923.9,120.5 923.7,124.6 M932.6,133.4 Q927.1,130.1 923.7,124.6 M932.6,133.4 Q940.7,136.9 947.8,137.3 M940.0,148.8 Q942.5,146.4 949.8,146.8 M927.7,177.9 Q932.7,180.1 935.4,182.6 M927.7,177.9 Q922.1,182.5 913.5,182.8 M927.7,177.9 Q937.8,170.9 944.8,167.6 M935.4,182.6 Q937.1,191.4 935.7,197.8 M935.4,182.6 Q943.5,188.2 948.3,190.9 M935.7,197.8 Q941.1,193.4 948.3,190.9 M935.4,229.3 Q938.1,235.1 940.6,242.0 M940.6,242.0 Q942.9,244.7 947.7,251.8 M931.3,254.0 Q934.2,247.6 940.6,242.0 M931.3,254.0 Q937.5,250.7 947.7,251.8 M935.5,294.3 Q945.8,294.9 953.9,296.1 M956.8,93.4 Q959.5,101.4 962.6,105.5 M956.8,93.4 Q955.7,100.7 957.4,107.7 M956.8,93.4 Q965.5,93.3 971.3,90.6 M957.4,107.7 Q959.0,106.9 962.6,105.5 M956.9,123.7 Q955.6,114.4 957.4,107.7 M947.8,137.3 Q947.7,144.1 949.8,146.8 M944.8,167.6 Q938.7,176.7 935.4,182.6 M944.8,167.6 Q944.9,156.2 940.0,148.8 M948.3,190.9 Q940.6,194.1 935.7,197.8 M948.3,190.9 Q955.6,196.2 959.0,204.2 M959.0,204.2 Q961.7,210.4 967.5,211.8 M958.7,229.5 Q963.2,230.9 963.3,233.7 M958.7,229.5 Q960.7,232.9 959.0,236.9 M959.0,236.9 Q962.5,236.1 963.3,233.7 M947.4,268.5 Q945.2,262.7 947.7,251.8 M947.4,268.5 Q953.1,274.4 963.6,278.0 M953.9,296.1 Q946.3,294.7 935.5,294.3 M953.9,296.1 Q958.1,287.7 963.6,278.0 M962.6,105.5 Q957.8,104.5 957.4,107.7 M962.6,105.5 Q967.2,98.7 971.3,90.6 M975.3,124.3 Q981.6,125.0 986.4,126.6 M972.8,136.7 Q973.6,129.4 975.3,124.3 M972.8,136.7 Q977.9,142.0 985.0,142.7 M964.1,158.4 Q966.5,169.0 966.4,175.6 M966.4,175.6 Q973.2,183.5 976.2,186.4 M976.2,186.4 Q979.9,187.3 982.0,189.3 M967.5,211.8 Q969.6,212.6 972.4,217.0 M972.4,217.0 Q969.5,216.3 967.5,211.8 M963.3,233.7 Q959.2,233.0 959.0,236.9 M963.3,233.7 Q973.4,230.4 980.4,228.3 M975.2,260.7 Q982.4,259.8 987.3,262.2 M963.6,278.0 Q957.6,271.2 947.4,268.5 M963.6,278.0 Q969.9,286.8 976.3,292.4 M976.3,292.4 Q980.2,293.2 986.0,290.5 M976.3,292.4 Q978.2,288.0 984.8,279.4 M980.4,78.6 Q993.4,79.3 1002.1,81.2 M993.2,105.3 Q995.0,108.3 995.4,107.6 M993.2,105.3 Q996.2,113.0 998.0,119.6 M986.4,126.6 Q979.2,124.0 975.3,124.3 M986.4,126.6 Q991.7,123.2 998.0,119.6 M985.0,142.7 Q987.3,144.3 991.0,149.6 M985.0,142.7 Q980.5,138.1 972.8,136.7 M985.0,142.7 Q987.7,136.4 986.4,126.6 M991.0,149.6 Q987.1,145.6 985.0,142.7 M982.2,167.8 Q975.0,170.7 966.4,175.6 M982.2,167.8 Q987.0,158.3 991.0,149.6 M982.0,189.3 Q981.9,194.1 982.3,203.8 M982.3,203.8 Q976.5,209.5 967.5,211.8 M980.4,228.3 Q981.6,231.1 983.8,238.4 M983.8,238.4 Q982.9,231.0 980.4,228.3 M983.8,238.4 Q992.0,242.8 1003.9,243.0 M984.8,279.4 Q986.2,286.4 986.0,290.5 M984.8,279.4 Q983.8,271.4 987.3,262.2 M1002.1,81.2 Q1009.8,88.5 1019.7,92.8 M1002.1,81.2 Q992.2,81.0 980.4,78.6 M995.4,107.6 Q993.0,105.5 993.2,105.3 M995.4,107.6 Q997.3,115.7 998.0,119.6 M998.0,119.6 Q994.3,121.6 986.4,126.6 M1006.4,137.9 Q1012.8,138.5 1020.9,143.8 M1000.3,154.3 Q994.5,151.1 991.0,149.6 M1000.3,154.3 Q1002.8,147.6 1006.4,137.9 M1003.8,175.3 Q1007.1,172.9 1014.2,170.1 M1003.8,175.3 Q1009.3,179.0 1013.5,184.0 M997.0,188.9 Q998.3,195.7 999.2,201.6 M997.0,188.9 Q987.5,191.6 982.0,189.3 M997.0,188.9 Q1001.1,181.6 1003.8,175.3 M999.2,201.6 Q1008.8,205.0 1013.5,207.6 M1007.2,222.1 Q1009.5,212.7 1013.5,207.6 M1007.2,222.1 Q1014.4,225.7 1024.3,228.1 M1003.9,243.0 Q1008.3,242.7 1014.7,242.3 M1009.3,255.1 Q1009.1,249.5 1003.9,243.0 M1009.3,255.1 Q1012.8,247.8 1014.7,242.3 M1004.7,273.1 Q1008.3,262.7 1009.3,255.1 M1003.2,292.9 Q1010.0,294.6 1015.7,296.9 M1003.2,292.9 Q996.6,289.8 986.0,290.5 M1019.7,92.8 Q1026.3,95.0 1031.8,102.0 M1019.7,92.8 Q1019.1,101.1 1023.0,108.8 M1023.0,108.8 Q1022.9,111.8 1026.8,116.3 M1023.0,108.8 Q1026.0,105.8 1031.8,102.0 M1026.8,116.3 Q1032.6,116.8 1037.2,117.5 M1020.9,143.8 Q1020.6,147.7 1025.2,148.4 M1020.9,143.8 Q1027.7,138.8 1032.3,134.2 M1025.2,148.4 Q1024.9,147.6 1020.9,143.8 M1014.2,170.1 Q1011.4,170.5 1003.8,175.3 M1014.2,170.1 Q1015.8,177.6 1013.5,184.0 M1014.2,170.1 Q1007.8,162.3 1000.3,154.3 M1013.5,184.0 Q1015.9,174.7 1014.2,170.1 M1013.5,184.0 Q1021.7,184.2 1029.6,185.4 M1013.5,207.6 Q1008.3,215.4 1007.2,222.1 M1024.3,228.1 Q1025.5,227.2 1030.3,229.4 M1024.3,228.1 Q1019.6,235.9 1014.7,242.3 M1014.7,242.3 Q1007.1,243.3 1003.9,243.0 M1014.7,242.3 Q1021.1,247.6 1022.5,250.5 M1022.5,250.5 Q1027.8,249.0 1031.0,252.4 M1022.5,250.5 Q1019.8,246.2 1014.7,242.3 M1022.5,250.5 Q1015.6,251.4 1009.3,255.1 M1025.9,280.2 Q1026.7,279.4 1030.0,277.3 M1044.5,91.1 Q1037.0,96.8 1031.8,102.0 M1044.5,91.1 Q1051.4,88.2 1058.9,82.3 M1031.8,102.0 Q1031.3,107.0 1026.8,116.3 M1032.3,134.2 Q1038.1,138.9 1040.4,146.6 M1037.8,170.1 Q1042.0,175.7 1047.5,177.7 M1037.8,170.1 Q1036.2,179.5 1029.6,185.4 M1029.6,185.4 Q1033.9,175.2 1037.8,170.1 M1029.6,185.4 Q1036.1,183.9 1047.5,177.7 M1038.9,205.2 Q1043.6,206.8 1047.6,210.5 M1038.9,205.2 Q1046.0,199.5 1056.1,192.6 M1030.3,229.4 Q1025.7,226.4 1024.3,228.1 M1031.0,252.4 Q1034.4,246.9 1041.4,246.2 M1033.5,284.3 Q1032.9,278.6 1030.0,277.3 M1052.8,75.3 Q1054.3,81.1 1058.9,82.3 M1052.8,75.3 Q1058.6,79.2 1064.1,81.4 M1058.9,82.3 Q1059.5,80.4 1064.1,81.4 M1048.6,109.4 Q1043.6,112.4 1037.2,117.5 M1047.7,130.2 Q1050.4,125.8 1055.1,123.1 M1056.9,152.9 Q1061.5,148.6 1068.7,146.6 M1056.9,152.9 Q1063.1,157.5 1067.2,163.6 M1047.5,177.7 Q1043.2,173.8 1037.8,170.1 M1047.5,177.7 Q1050.7,186.4 1056.1,192.6 M1056.1,192.6 Q1058.8,198.7 1066.2,204.6 M1056.1,192.6 Q1065.2,188.4 1074.6,188.8 M1047.6,210.5 Q1044.9,208.2 1038.9,205.2 M1047.4,227.6 Q1047.8,230.5 1053.3,236.5 M1047.4,227.6 Q1048.8,221.4 1047.6,210.5 M1053.3,236.5 Q1049.0,243.8 1041.4,246.2 M1053.3,236.5 Q1065.1,239.6 1075.9,238.0 M1054.8,262.5 Q1050.9,266.5 1050.4,267.3 M1054.8,262.5 Q1065.1,260.5 1070.9,261.1 M1050.4,267.3 Q1050.6,265.6 1054.8,262.5 M1050.4,267.3 Q1050.3,278.1 1054.4,286.0 M1054.4,286.0 Q1051.7,276.2 1050.4,267.3 M1064.1,81.4 Q1062.8,81.5 1058.9,82.3 M1064.1,81.4 Q1057.8,77.4 1052.8,75.3 M1064.1,81.4 Q1065.8,91.0 1068.1,100.0 M1068.1,100.0 Q1070.9,110.4 1075.0,116.8 M1068.1,100.0 Q1076.0,100.1 1086.5,100.7 M1075.0,116.8 Q1077.3,114.7 1081.2,114.3 M1071.0,132.1 Q1078.1,136.1 1081.4,140.7 M1071.0,132.1 Q1068.9,139.2 1068.7,146.6 M1068.7,146.6 Q1060.9,149.5 1056.9,152.9 M1068.7,146.6 Q1077.0,142.3 1081.4,140.7 M1067.2,163.6 Q1069.2,156.8 1068.7,146.6 M1074.6,188.8 Q1079.2,184.9 1081.6,176.2 M1074.6,188.8 Q1080.8,195.4 1084.7,201.1 M1066.2,204.6 Q1071.1,208.7 1077.7,216.0 M1077.7,216.0 Q1079.5,219.5 1084.8,221.4 M1075.9,238.0 Q1078.7,240.5 1082.8,238.2 M1075.9,238.0 Q1081.9,230.9 1084.8,221.4 M1070.9,261.1 Q1075.7,264.2 1084.4,263.1 M1069.4,273.1 Q1070.0,264.6 1070.9,261.1 M1069.4,273.1 Q1061.8,266.4 1054.8,262.5 M1069.4,273.1 Q1079.3,267.0 1084.4,263.1 M1073.9,297.4 Q1077.2,297.8 1084.1,297.1 M1085.6,74.1 Q1085.9,79.8 1091.2,88.1 M1085.6,74.1 Q1093.3,80.2 1097.4,84.2 M1085.6,74.1 Q1075.6,79.5 1064.1,81.4 M1091.2,88.1 Q1095.2,86.9 1097.4,84.2 M1086.5,100.7 Q1087.6,95.4 1091.2,88.1 M1086.5,100.7 Q1082.5,107.0 1081.2,114.3 M1081.2,114.3 Q1083.5,107.3 1086.5,100.7 M1081.4,140.7 Q1082.9,145.6 1084.3,148.8 M1081.4,140.7 Q1078.2,135.5 1071.0,132.1 M1084.3,148.8 Q1080.8,143.5 1081.4,140.7 M1084.3,148.8 Q1090.1,151.8 1098.7,152.5 M1084.3,148.8 Q1074.9,147.0 1068.7,146.6 M1081.6,176.2 Q1079.2,182.6 1074.6,188.8 M1081.6,176.2 Q1088.4,185.1 1093.7,190.6 M1081.6,176.2 Q1074.0,172.2 1067.2,163.6 M1093.7,190.6 Q1100.3,185.6 1102.0,183.9 M1093.7,190.6 Q1091.4,197.0 1084.7,201.1 M1084.7,201.1 Q1089.9,194.6 1093.7,190.6 M1082.8,238.2 Q1080.0,239.0 1075.9,238.0 M1082.8,238.2 Q1084.2,227.8 1084.8,221.4 M1084.4,263.1 Q1077.8,260.7 1070.9,261.1 M1084.4,263.1 Q1091.3,267.8 1095.2,273.7 M1095.2,273.7 Q1087.6,269.9 1084.4,263.1 M1095.2,273.7 Q1102.3,271.4 1112.4,267.6 M1084.1,297.1 Q1077.2,298.1 1073.9,297.4 M1084.1,297.1 Q1097.9,296.2 1108.4,292.2 M1097.4,84.2 Q1090.0,94.1 1086.5,100.7 M1104.6,103.0 Q1101.1,112.6 1100.4,120.1 M1104.6,103.0 Q1098.0,102.8 1086.5,100.7 M1100.4,120.1 Q1109.6,119.1 1116.5,120.4 M1100.4,120.1 Q1101.2,110.5 1104.6,103.0 M1097.4,133.4 Q1098.8,127.4 1100.4,120.1 M1097.4,133.4 Q1100.1,141.2 1098.7,152.5 M1098.7,152.5 Q1096.1,159.8 1098.0,163.7 M1098.7,152.5 Q1092.9,148.8 1084.3,148.8 M1098.0,163.7 Q1099.0,155.6 1098.7,152.5 M1102.0,183.9 Q1096.6,185.2 1093.7,190.6 M1106.3,205.4 Q1113.9,200.0 1117.9,197.8 M1106.3,205.4 Q1111.1,214.1 1116.4,219.9 M1108.8,224.4 Q1114.7,223.6 1116.4,219.9 M1108.3,244.8 Q1113.0,246.5 1116.0,244.1 M1103.3,253.3 Q1104.3,250.1 1108.3,244.8 M1103.3,253.3 Q1109.8,250.0 1116.0,244.1 M1112.4,267.6 Q1119.0,269.7 1123.9,275.8 M1112.4,267.6 Q1115.7,262.4 1122.9,258.0 M1112.4,267.6 Q1107.7,260.8 1103.3,253.3 M1108.4,292.2 Q1115.0,285.5 1121.8,282.4 M1108.4,292.2 Q1116.1,284.0 1123.9,275.8 M1108.4,292.2 Q1103.7,280.4 1095.2,273.7 M1115.0,74.1 Q1121.3,81.4 1128.0,87.9 M1115.0,74.1 Q1107.9,78.5 1097.4,84.2 M1128.0,87.9 Q1136.1,88.1 1139.0,86.5 M1128.0,87.9 Q1133.1,91.4 1141.4,96.4 M1128.0,87.9 Q1119.1,78.7 1115.0,74.1 M1125.6,107.8 Q1119.0,114.0 1116.5,120.4 M1125.6,107.8 Q1135.4,110.2 1142.6,116.2 M1116.5,120.4 Q1122.1,114.7 1125.6,107.8 M1122.1,142.1 Q1126.5,139.2 1132.5,133.4 M1122.1,142.1 Q1124.6,152.7 1126.7,159.0 M1123.3,177.0 Q1125.7,182.9 1124.8,191.0 M1124.8,191.0 Q1122.9,184.0 1123.3,177.0 M1124.8,191.0 Q1134.3,189.4 1138.9,186.2 M1117.9,197.8 Q1120.5,193.5 1124.8,191.0 M1116.4,219.9 Q1109.2,215.2 1106.3,205.4 M1116.0,244.1 Q1114.1,244.7 1108.3,244.8 M1116.0,244.1 Q1117.1,250.0 1122.9,258.0 M1122.9,258.0 Q1129.9,255.0 1133.6,252.2 M1122.9,258.0 Q1115.4,262.8 1112.4,267.6 M1123.9,275.8 Q1123.5,280.1 1121.8,282.4 M1123.9,275.8 Q1119.1,270.2 1112.4,267.6 M1123.9,275.8 Q1132.8,278.9 1140.0,282.5 M1121.8,282.4 Q1120.9,277.5 1123.9,275.8 M1143.6,72.8 Q1142.1,79.0 1139.0,86.5 M1139.0,86.5 Q1141.7,91.8 1141.4,96.4 M1142.5,149.5 Q1136.0,153.8 1126.7,159.0 M1138.9,186.2 Q1140.7,181.8 1142.7,178.3 M1138.7,207.8 Q1139.4,214.0 1143.1,223.8 M1138.7,207.8 Q1136.3,194.5 1138.9,186.2 M1138.7,207.8 Q1129.8,201.8 1124.8,191.0 M1141.2,232.5 Q1140.2,225.7 1143.1,223.8 M1133.6,252.2 Q1126.9,247.5 1116.0,244.1 M1142.7,270.0 Q1139.3,276.9 1140.0,282.5 M1142.7,270.0 Q1133.1,275.1 1123.9,275.8 M1140.0,282.5 Q1143.5,274.0 1142.7,270.0 M462.0,594.1 Q465.2,593.3 468.4,588.4 M473.6,562.8 Q476.8,570.8 480.8,576.2 M473.6,562.8 Q484.1,562.6 491.3,561.5 M480.8,576.2 Q484.5,578.8 485.0,579.6 M468.4,588.4 Q474.8,581.8 480.8,576.2 M475.5,605.5 Q483.1,604.3 488.4,598.6 M473.0,614.1 Q474.0,608.4 475.5,605.5 M473.0,614.1 Q477.5,614.6 483.7,618.2 M473.0,614.1 Q481.0,606.7 488.4,598.6 M494.8,391.6 Q499.2,394.9 500.7,399.7 M495.7,409.9 Q501.5,406.8 503.3,406.4 M495.7,409.9 Q497.9,406.7 500.7,399.7 M494.9,423.3 Q499.3,420.8 508.0,420.6 M495.0,500.9 Q500.1,504.4 504.8,509.6 M495.0,500.9 Q502.2,501.9 508.2,503.5 M491.2,511.1 Q492.6,505.4 495.0,500.9 M491.2,511.1 Q498.4,509.7 504.8,509.6 M491.2,511.1 Q495.5,519.9 495.7,527.0 M495.7,527.0 Q497.3,524.6 502.5,523.3 M484.6,544.3 Q494.5,548.4 500.9,548.4 M484.6,544.3 Q487.8,552.6 491.3,561.5 M491.3,561.5 Q499.6,561.4 506.2,559.2 M491.3,561.5 Q494.3,554.3 500.9,548.4 M485.0,579.6 Q484.4,578.0 480.8,576.2 M485.0,579.6 Q484.7,589.9 487.8,596.7 M487.8,596.7 Q489.5,599.9 488.4,598.6 M487.8,596.7 Q481.3,599.5 475.5,605.5 M488.4,598.6 Q486.8,599.4 487.8,596.7 M483.7,618.2 Q478.8,615.5 473.0,614.1 M492.8,634.8 Q499.4,627.3 504.2,624.2 M494.7,655.3 Q498.7,656.3 504.6,655.6 M494.9,666.9 Q494.3,659.3 494.7,655.3 M495.7,682.8 Q501.9,686.7 506.6,693.3 M486.4,704.5 Q497.7,699.2 506.6,693.3 M486.4,704.5 Q492.7,695.4 495.7,682.8 M486.4,704.5 Q502.7,695.8 518.9,690.4 M510.7,380.1 Q514.2,382.6 518.4,388.5 M510.7,380.1 Q516.9,384.1 526.2,385.8 M500.7,399.7 Q499.9,401.2 503.3,406.4 M503.3,406.4 Q502.5,404.5 500.7,399.7 M503.3,406.4 Q506.6,412.6 514.3,416.4 M508.0,420.6 Q509.5,417.3 514.3,416.4 M508.0,420.6 Q511.8,418.9 517.6,421.4 M511.0,446.0 Q514.5,444.1 514.8,438.2 M499.1,455.7 Q504.3,450.6 511.0,446.0 M498.6,475.7 Q498.0,479.2 501.7,485.2 M498.6,475.7 Q506.7,473.7 515.7,469.3 M498.6,475.7 Q496.8,463.7 499.1,455.7 M508.2,503.5 Q513.5,502.6 515.3,498.9 M504.8,509.6 Q506.1,505.5 508.2,503.5 M504.8,509.6 Q512.4,511.3 516.6,508.6 M500.9,548.4 Q504.4,554.2 506.2,559.2 M506.2,559.2 Q508.3,561.0 514.7,559.4 M507.1,574.6 Q512.0,574.6 519.8,570.3 M507.1,574.6 Q504.9,567.1 506.2,559.2 M503.3,588.5 Q504.4,582.2 507.1,574.6 M503.3,588.5 Q505.4,595.6 503.3,603.4 M503.3,588.5 Q513.6,590.4 520.2,591.8 M510.6,640.3 Q512.0,637.8 514.9,638.4 M504.6,655.6 Q505.0,656.9 509.0,660.4 M504.6,655.6 Q497.9,655.2 494.7,655.3 M509.0,660.4 Q512.2,661.9 516.8,661.5 M509.5,674.3 Q513.6,676.8 516.5,678.5 M509.5,674.3 Q513.0,666.6 516.8,661.5 M506.6,693.3 Q513.5,693.9 518.9,690.4 M506.6,693.3 Q501.6,687.8 495.7,682.8 M506.6,693.3 Q513.7,686.1 516.5,678.5 M526.2,385.8 Q528.7,382.5 530.2,381.9 M526.2,385.8 Q520.6,387.2 518.4,388.5 M526.2,385.8 Q530.4,389.4 534.2,395.1 M518.4,388.5 Q520.2,388.1 526.2,385.8 M518.4,388.5 Q522.1,386.2 530.2,381.9 M514.3,416.4 Q517.2,417.7 517.6,421.4 M514.8,438.2 Q514.0,440.7 511.0,446.0 M514.8,438.2 Q517.2,427.9 517.6,421.4 M517.7,458.2 Q524.2,455.0 528.8,453.8 M515.7,469.3 Q518.3,463.6 517.7,458.2 M515.7,469.3 Q524.4,468.1 532.0,465.7 M515.7,469.3 Q522.1,478.7 525.3,484.2 M525.3,484.2 Q526.2,490.7 531.4,495.6 M525.3,484.2 Q533.2,484.1 539.6,485.3 M515.3,498.9 Q516.8,503.6 516.6,508.6 M515.3,498.9 Q509.6,506.1 504.8,509.6 M521.0,527.3 Q521.5,535.0 524.1,541.8 M524.1,541.8 Q532.3,539.1 538.5,540.6 M514.7,559.4 Q518.4,563.3 519.8,570.3 M519.8,570.3 Q517.8,566.9 514.7,559.4 M520.2,591.8 Q526.6,588.6 532.4,583.4 M523.9,610.7 Q522.7,619.6 520.8,624.5 M523.9,610.7 Q529.0,609.2 537.6,605.3 M523.9,610.7 Q523.8,602.9 520.2,591.8 M520.8,624.5 Q524.5,618.4 523.9,610.7 M514.9,638.4 Q511.4,641.2 510.6,640.3 M526.4,649.1 Q528.8,651.6 532.1,651.9 M516.5,678.5 Q516.9,684.5 518.9,690.4 M516.5,678.5 Q517.5,671.5 516.8,661.5 M518.9,690.4 Q518.5,683.2 516.5,678.5 M518.9,690.4 Q514.3,693.1 506.6,693.3 M518.9,690.4 Q524.4,692.4 530.0,697.2 M534.2,395.1 Q529.1,388.4 526.2,385.8 M535.1,409.2 Q545.6,407.0 554.8,408.1 M535.1,409.2 Q526.3,415.2 517.6,421.4 M538.9,431.0 Q539.3,435.4 544.2,438.1 M532.1,438.1 Q536.4,432.9 538.9,431.0 M532.1,438.1 Q539.1,438.5 544.2,438.1 M528.8,453.8 Q531.8,459.9 532.0,465.7 M532.0,465.7 Q528.8,461.9 528.8,453.8 M532.0,465.7 Q540.8,462.1 546.6,459.5 M531.4,495.6 Q533.4,492.2 539.6,485.3 M536.4,519.4 Q539.2,519.7 544.7,518.1 M536.4,519.4 Q542.6,519.8 549.3,523.6 M540.3,533.1 Q545.1,527.4 549.3,523.6 M538.5,540.6 Q537.3,536.7 540.3,533.1 M530.1,562.3 Q531.5,567.5 536.7,570.8 M530.1,562.3 Q525.2,564.5 519.8,570.3 M536.7,570.8 Q533.8,576.5 532.4,583.4 M536.7,570.8 Q542.3,569.7 551.6,570.5 M532.4,583.4 Q535.3,575.2 536.7,570.8 M532.4,583.4 Q524.2,587.1 520.2,591.8 M537.6,605.3 Q541.1,598.6 547.5,590.7 M539.6,625.6 Q544.2,631.7 546.8,639.6 M535.2,632.9 Q536.9,629.9 539.6,625.6 M535.2,632.9 Q540.4,635.0 546.8,639.6 M532.1,651.9 Q528.6,652.0 526.4,649.1 M532.1,651.9 Q535.4,653.6 541.0,659.5 M541.0,659.5 Q545.6,663.9 546.5,664.2 M541.0,659.5 Q546.4,652.9 551.8,649.5 M533.8,683.6 Q532.5,688.8 530.0,697.2 M533.8,683.6 Q538.5,686.1 545.7,691.9 M530.0,697.2 Q528.8,703.8 531.6,710.9 M530.0,697.2 Q530.5,691.4 533.8,683.6 M556.6,373.7 Q560.9,372.3 568.5,374.7 M556.6,373.7 Q563.2,381.1 573.9,386.5 M556.6,373.7 Q552.7,382.7 552.7,396.0 M552.7,396.0 Q558.1,396.6 559.9,400.2 M552.7,396.0 Q552.9,401.8 554.8,408.1 M554.8,408.1 Q557.7,404.0 559.9,400.2 M554.8,408.1 Q560.4,407.3 565.6,406.3 M555.8,431.3 Q560.7,431.1 561.3,427.3 M555.8,431.3 Q561.8,437.1 564.5,438.6 M555.8,431.3 Q550.6,436.1 544.2,438.1 M544.2,438.1 Q540.8,435.2 538.9,431.0 M546.6,459.5 Q539.2,463.2 532.0,465.7 M546.6,459.5 Q550.2,465.9 555.6,473.8 M546.6,459.5 Q535.6,455.2 528.8,453.8 M555.6,473.8 Q562.1,471.6 566.8,472.6 M555.6,473.8 Q555.5,481.9 555.0,486.0 M555.6,473.8 Q560.3,478.9 566.3,486.4 M555.0,486.0 Q554.7,489.9 555.4,497.2 M555.0,486.0 Q559.2,488.0 566.3,486.4 M555.0,486.0 Q555.5,478.2 555.6,473.8 M555.4,497.2 Q557.7,500.4 558.7,506.4 M555.4,497.2 Q556.1,490.4 555.0,486.0 M544.7,518.1 Q545.8,521.2 549.3,523.6 M544.7,518.1 Q551.9,516.0 559.0,513.2 M549.3,523.6 Q547.8,522.2 544.7,518.1 M554.1,540.1 Q560.5,537.5 563.7,534.6 M554.1,540.1 Q548.3,534.9 540.3,533.1 M551.6,570.5 Q557.3,574.2 562.6,573.7 M551.6,570.5 Q557.4,568.4 565.9,566.6 M547.5,590.7 Q553.0,592.6 556.1,598.5 M556.1,598.5 Q556.1,603.9 560.2,607.4 M556.1,598.5 Q551.6,592.9 547.5,590.7 M555.8,623.2 Q559.1,625.9 563.0,625.0 M555.8,623.2 Q562.0,627.5 567.2,628.4 M546.8,639.6 Q551.2,646.2 551.8,649.5 M551.8,649.5 Q555.2,649.2 559.7,645.8 M551.8,649.5 Q550.4,642.3 546.8,639.6 M546.5,664.2 Q546.7,670.4 548.0,674.5 M548.0,674.5 Q545.2,669.8 546.5,664.2 M545.7,691.9 Q538.0,689.7 533.8,683.6 M545.7,691.9 Q536.8,693.2 530.0,697.2 M568.5,374.7 Q573.4,380.3 573.9,386.5 M568.5,374.7 Q578.8,381.7 586.4,388.8 M559.9,400.2 Q554.9,398.3 552.7,396.0 M565.6,406.3 Q563.5,404.8 559.9,400.2 M565.6,406.3 Q559.1,409.4 554.8,408.1 M561.3,427.3 Q556.4,428.6 555.8,431.3 M561.3,427.3 Q561.3,432.9 564.5,438.6 M564.5,438.6 Q558.1,433.5 555.8,431.3 M571.1,448.5 Q573.9,451.2 573.7,449.6 M571.1,448.5 Q577.3,446.1 581.7,444.1 M566.3,486.4 Q569.7,483.1 576.4,478.8 M558.7,506.4 Q557.4,509.1 559.0,513.2 M563.7,534.6 Q563.6,541.9 567.9,549.6 M563.7,534.6 Q554.4,527.5 549.3,523.6 M565.9,566.6 Q559.1,566.9 551.6,570.5 M562.6,573.7 Q566.1,571.9 565.9,566.6 M565.8,587.6 Q565.4,581.2 562.6,573.7 M563.0,625.0 Q566.4,625.5 567.2,628.4 M563.0,625.0 Q557.8,622.2 555.8,623.2 M567.2,628.4 Q565.2,627.3 563.0,625.0 M567.2,628.4 Q571.5,631.6 577.1,634.4 M559.7,645.8 Q554.0,644.4 546.8,639.6 M559.7,645.8 Q562.4,653.4 562.6,661.0 M562.6,661.0 Q563.4,651.8 559.7,645.8 M567.3,676.3 Q572.3,680.3 578.2,685.3 M567.3,676.3 Q574.1,672.9 578.5,665.7 M567.3,676.3 Q563.4,669.6 562.6,661.0 M563.9,693.6 Q571.7,694.4 577.3,694.7 M563.9,693.6 Q573.0,688.7 578.2,685.3 M573.9,386.5 Q580.5,385.7 586.4,388.8 M586.4,388.8 Q579.5,388.9 573.9,386.5 M586.4,388.8 Q589.2,384.0 592.8,375.8 M584.9,411.6 Q590.8,412.9 593.6,415.7 M585.6,426.7 Q587.0,427.8 590.4,431.1 M585.6,426.7 Q587.0,430.6 592.6,437.6 M574.9,463.4 Q569.9,468.0 566.8,472.6 M576.4,478.8 Q573.7,476.2 566.8,472.6 M574.8,497.9 Q576.1,501.3 575.5,509.1 M575.5,509.1 Q577.0,502.2 574.8,497.9 M586.2,535.7 Q583.7,537.5 585.4,539.4 M586.2,535.7 Q593.3,533.2 599.5,528.0 M585.4,539.4 Q583.8,537.2 586.2,535.7 M585.4,539.4 Q589.9,542.9 598.5,545.3 M581.2,565.8 Q582.4,570.0 579.2,575.2 M581.2,565.8 Q575.2,564.1 565.9,566.6 M579.2,575.2 Q580.5,572.7 581.2,565.8 M585.2,595.6 Q585.9,599.7 591.0,606.5 M581.0,602.0 Q582.5,598.2 585.2,595.6 M583.2,623.2 Q587.8,624.3 592.0,624.6 M583.2,623.2 Q580.9,629.3 577.1,634.4 M577.1,634.4 Q580.7,630.2 583.2,623.2 M582.6,646.2 Q587.3,644.3 589.5,639.8 M582.6,646.2 Q582.7,655.7 578.5,665.7 M578.5,665.7 Q584.5,666.3 591.9,666.8 M577.3,694.7 Q576.2,690.6 578.2,685.3 M592.8,375.8 Q590.1,380.6 586.4,388.8 M595.6,401.3 Q593.2,410.5 593.6,415.7 M593.6,415.7 Q590.9,415.3 584.9,411.6 M593.6,415.7 Q589.8,420.5 585.6,426.7 M590.4,431.1 Q593.2,433.1 592.6,437.6 M592.6,437.6 Q591.0,433.1 590.4,431.1 M592.6,437.6 Q585.0,441.6 581.7,444.1 M591.2,464.0 Q592.3,461.4 591.9,460.1 M588.5,485.7 Q583.1,481.0 576.4,478.8 M588.5,485.7 Q591.4,490.7 596.4,497.9 M596.4,497.9 Q596.0,506.3 597.1,515.2 M597.1,515.2 Q597.4,523.9 599.5,528.0 M599.5,528.0 Q594.1,533.9 586.2,535.7 M598.5,545.3 Q591.0,541.6 585.4,539.4 M601.6,562.4 Q600.5,553.6 598.5,545.3 M600.9,573.9 Q603.0,566.8 601.6,562.4 M597.3,585.1 Q597.0,580.7 600.9,573.9 M591.0,606.5 Q588.2,603.3 581.0,602.0 M591.0,606.5 Q589.7,617.7 592.0,624.6 M589.5,639.8 Q581.5,635.6 577.1,634.4 M600.7,656.7 Q592.6,653.2 582.6,646.2 M591.9,666.8 Q596.7,660.4 600.7,656.7 M593.8,689.6 Q595.6,687.1 596.8,682.7 M593.8,689.6 Q584.0,689.2 578.2,685.3 M589.8,380.9 Q606.3,394.2 620.6,411.9 M589.8,380.9 Q611.6,387.6 632.8,400.6 M610.7,427.0 Q610.5,432.7 615.3,440.9 M610.7,427.0 Q614.9,415.9 620.6,411.9 M600.6,430.4 Q602.7,432.0 610.7,427.0 M600.6,430.4 Q611.8,439.1 615.3,440.9 M593.5,468.9 Q605.6,465.3 620.9,464.0 M603.1,495.1 Q616.5,503.5 623.9,505.5 M603.1,495.1 Q605.0,506.2 611.5,520.7 M611.5,520.7 Q615.4,512.9 623.9,505.5 M607.9,556.7 Q616.2,558.7 623.3,563.8 M607.9,556.7 Q616.7,548.7 624.2,546.9 M590.1,583.0 Q590.6,602.0 593.5,614.0 M608.3,609.0 Q618.9,607.6 632.1,606.9 M593.5,614.0 Q599.6,610.5 608.3,609.0 M593.5,614.0 Q596.1,628.9 604.8,638.7 M604.8,638.7 Q618.7,640.9 629.2,643.9 M594.6,686.9 Q594.5,688.9 592.9,691.4 M592.9,691.4 Q590.2,689.8 594.6,686.9 M632.8,400.6 Q623.8,406.9 620.6,411.9 M632.8,400.6 Q643.2,402.5 655.8,406.3 M632.8,400.6 Q649.4,396.5 663.5,397.6 M620.6,411.9 Q627.9,403.1 632.8,400.6 M615.3,440.9 Q615.0,450.4 620.9,464.0 M620.9,464.0 Q604.2,466.2 593.5,468.9 M623.9,505.5 Q628.4,506.5 631.7,514.6 M631.7,514.6 Q641.6,523.1 650.7,523.9 M624.2,546.9 Q624.0,553.4 623.3,563.8 M623.3,563.8 Q615.5,562.5 607.9,556.7 M632.1,606.9 Q643.2,598.5 651.3,594.3 M632.1,606.9 Q617.5,606.1 608.3,609.0 M629.2,643.9 Q629.5,641.7 633.1,633.3 M626.0,687.4 Q629.6,695.2 630.5,707.4 M630.5,707.4 Q636.9,712.5 641.8,713.1 M630.5,707.4 Q624.9,695.4 626.0,687.4 M663.5,397.6 Q671.8,392.1 672.5,393.7 M663.5,397.6 Q661.2,404.4 655.8,406.3 M655.8,406.3 Q656.4,404.0 663.5,397.6 M655.8,406.3 Q664.9,397.6 672.5,393.7 M654.8,431.1 Q658.8,418.0 655.8,406.3 M654.8,431.1 Q669.2,435.3 685.0,445.8 M657.1,465.8 Q669.7,470.1 687.9,474.2 M653.4,498.3 Q665.0,497.8 672.4,502.0 M653.4,498.3 Q653.5,512.8 650.7,523.9 M650.7,523.9 Q643.5,519.1 631.7,514.6 M651.0,547.8 Q649.5,532.5 650.7,523.9 M651.0,547.8 Q634.2,550.2 624.2,546.9 M651.0,547.8 Q647.7,560.6 651.4,575.4 M651.4,575.4 Q650.0,559.0 651.0,547.8 M651.4,575.4 Q638.7,571.6 623.3,563.8 M651.3,594.3 Q649.5,586.4 651.4,575.4 M653.1,621.2 Q664.0,621.3 671.1,616.3 M659.6,656.8 Q666.7,658.0 674.9,654.1 M659.6,656.8 Q662.3,667.6 660.6,672.6 M660.6,672.6 Q667.2,676.9 669.9,679.8 M660.6,672.6 Q661.2,661.3 659.6,656.8 M641.8,713.1 Q638.9,708.2 630.5,707.4 M641.8,713.1 Q656.8,713.3 670.5,712.5 M672.5,393.7 Q671.4,398.7 663.5,397.6 M672.5,393.7 Q675.6,401.1 685.6,406.0 M685.6,406.0 Q678.4,396.6 672.5,393.7 M685.6,406.0 Q677.2,400.6 663.5,397.6 M685.0,445.8 Q695.1,444.3 700.8,450.5 M685.0,445.8 Q693.6,452.1 702.3,465.9 M685.0,445.8 Q683.4,462.5 687.9,474.2 M687.9,474.2 Q694.4,468.5 702.3,465.9 M687.9,474.2 Q695.6,483.0 708.7,491.1 M687.9,474.2 Q691.1,461.5 700.8,450.5 M672.4,502.0 Q661.3,496.9 653.4,498.3 M672.4,502.0 Q677.6,510.8 686.4,516.4 M686.4,516.4 Q690.6,521.6 700.8,523.8 M680.1,547.7 Q684.0,553.4 689.7,561.8 M680.1,547.7 Q689.6,541.9 704.5,541.4 M689.7,561.8 Q685.8,557.8 680.1,547.7 M689.7,561.8 Q697.9,564.3 707.8,566.7 M684.0,594.8 Q694.3,599.4 699.1,596.7 M669.9,679.8 Q666.6,680.0 660.6,672.6 M669.9,679.8 Q666.7,669.6 659.6,656.8 M670.5,712.5 Q686.2,710.2 695.4,701.7 M670.5,712.5 Q652.8,713.8 641.8,713.1 M712.3,393.6 Q711.1,401.1 713.6,411.8 M712.3,393.6 Q721.5,394.8 733.8,392.9 M712.3,393.6 Q702.4,402.2 685.6,406.0 M713.6,411.8 Q713.0,401.6 712.3,393.6 M700.8,450.5 Q698.1,460.8 702.3,465.9 M702.3,465.9 Q701.1,460.2 700.8,450.5 M708.7,491.1 Q722.2,492.2 732.1,489.5 M700.8,523.8 Q698.8,536.0 704.5,541.4 M704.5,541.4 Q715.1,541.5 724.3,540.5 M707.8,566.7 Q696.2,565.0 689.7,561.8 M699.1,596.7 Q689.5,597.9 684.0,594.8 M694.9,627.2 Q703.3,637.1 709.4,642.4 M694.9,627.2 Q682.1,625.3 671.1,616.3 M694.9,627.2 Q709.7,632.4 721.3,634.7 M709.4,642.4 Q714.0,641.2 721.3,634.7 M704.4,664.4 Q717.0,659.3 725.1,656.6 M695.4,701.7 Q713.6,693.1 727.1,691.3 M733.8,392.9 Q720.5,391.7 712.3,393.6 M730.5,423.1 Q724.2,416.4 713.6,411.8 M730.5,423.1 Q725.6,436.2 724.2,443.3 M724.2,443.3 Q726.0,432.7 730.5,423.1 M718.3,462.4 Q719.9,455.1 724.2,443.3 M732.1,489.5 Q748.6,496.9 758.8,505.2 M731.0,529.8 Q729.8,533.7 724.3,540.5 M731.0,529.8 Q735.7,536.4 745.8,539.1 M724.3,540.5 Q729.6,533.4 731.0,529.8 M724.3,540.5 Q738.3,540.0 745.8,539.1 M728.6,572.6 Q731.9,577.5 729.8,588.4 M721.3,634.7 Q726.6,643.8 725.1,656.6 M725.1,656.6 Q720.2,646.3 709.4,642.4 M725.1,656.6 Q717.3,663.1 704.4,664.4 M739.8,681.1 Q746.7,676.7 746.8,677.5 M727.1,691.3 Q737.1,687.2 739.8,681.1 M727.1,691.3 Q738.5,686.5 746.8,677.5 M761.9,401.0 Q770.8,405.7 774.4,405.8 M761.9,401.0 Q773.9,400.5 780.5,401.6 M754.4,418.5 Q755.7,412.7 761.9,401.0 M750.3,435.9 Q753.7,430.3 754.4,418.5 M764.2,459.3 Q779.4,454.5 787.9,456.5 M758.8,505.2 Q764.2,514.8 764.2,521.9 M764.2,521.9 Q774.2,524.2 783.0,530.0 M764.2,521.9 Q773.4,534.2 777.2,542.0 M745.8,539.1 Q737.0,539.8 724.3,540.5 M764.4,562.2 Q775.0,568.5 779.4,571.1 M764.4,562.2 Q773.3,553.3 777.2,542.0 M754.7,595.5 Q760.7,602.4 772.4,606.1 M754.7,595.5 Q743.2,590.2 729.8,588.4 M754.0,634.2 Q758.8,646.3 759.3,656.8 M759.3,656.8 Q771.5,660.6 781.9,658.1 M746.8,677.5 Q747.0,681.6 739.8,681.1 M766.2,706.7 Q774.9,704.4 789.6,695.0 M780.5,401.6 Q768.4,399.5 761.9,401.0 M774.4,405.8 Q781.2,404.4 780.5,401.6 M779.6,433.5 Q780.2,447.5 787.9,456.5 M787.9,456.5 Q796.7,455.4 805.8,457.5 M775.7,487.0 Q767.5,494.0 758.8,505.2 M775.7,487.0 Q772.5,471.5 764.2,459.3 M777.2,542.0 Q776.4,536.0 783.0,530.0 M779.4,571.1 Q770.1,563.4 764.4,562.2 M772.4,606.1 Q777.3,609.5 783.7,612.7 M783.7,612.7 Q796.3,621.0 803.3,621.5 M783.7,612.7 Q796.8,610.8 805.3,601.8 M781.9,658.1 Q776.7,667.6 775.3,674.9 M781.9,658.1 Q770.1,661.1 759.3,656.8 M775.3,674.9 Q776.2,667.4 781.9,658.1 M775.3,674.9 Q779.9,687.0 789.6,695.0 M789.6,695.0 Q799.2,697.9 805.2,700.5 M804.2,398.5 Q816.9,406.1 825.4,409.2 M804.2,398.5 Q808.6,412.3 809.2,421.8 M809.2,421.8 Q814.5,431.2 816.0,433.6 M809.2,421.8 Q820.6,417.2 825.4,409.2 M805.8,457.5 Q813.5,446.6 816.0,433.6 M811.0,489.8 Q818.7,497.9 825.6,504.1 M811.0,489.8 Q824.8,479.9 837.7,472.9 M800.7,546.9 Q802.2,538.5 800.8,531.3 M800.7,546.9 Q800.9,556.3 808.5,562.3 M805.3,601.8 Q813.5,608.2 823.9,608.6 M803.3,621.5 Q807.5,614.0 805.3,601.8 M817.0,654.2 Q825.3,655.1 827.4,648.6 M817.0,654.2 Q824.7,661.9 827.0,669.2 M803.5,670.1 Q808.0,660.2 817.0,654.2 M803.5,670.1 Q811.5,672.8 827.0,669.2 M803.5,670.1 Q796.2,667.9 781.9,658.1 M805.2,700.5 Q799.2,695.1 789.6,695.0 M805.2,700.5 Q803.8,682.5 803.5,670.1 M805.2,700.5 Q813.1,686.6 827.0,669.2 M834.9,385.4 Q842.7,392.8 857.8,395.3 M834.9,385.4 Q826.9,399.5 825.4,409.2 M834.9,385.4 Q841.7,397.8 853.1,409.1 M825.4,409.2 Q816.0,415.9 809.2,421.8 M837.6,452.1 Q844.9,452.3 852.5,450.4 M837.6,452.1 Q842.1,453.8 851.2,459.5 M837.6,452.1 Q840.8,461.6 837.7,472.9 M837.7,472.9 Q841.3,469.2 851.2,459.5 M825.6,504.1 Q827.5,512.1 830.3,519.0 M825.6,504.1 Q819.7,500.2 811.0,489.8 M830.3,519.0 Q829.7,514.3 825.6,504.1 M838.8,549.8 Q838.3,556.5 839.4,560.5 M838.8,549.8 Q847.2,555.6 852.1,565.5 M839.4,560.5 Q838.9,552.4 838.8,549.8 M839.4,560.5 Q848.9,563.8 852.1,565.5 M839.4,560.5 Q848.9,554.0 865.2,551.6 M823.9,608.6 Q828.9,611.4 841.6,613.1 M823.9,608.6 Q812.4,607.1 805.3,601.8 M827.4,648.6 Q818.6,647.9 817.0,654.2 M827.0,669.2 Q818.5,662.2 817.0,654.2 M827.0,669.2 Q827.8,658.2 827.4,648.6 M853.1,409.1 Q855.3,405.8 857.8,395.3 M851.2,459.5 Q852.8,453.6 852.5,450.4 M851.2,459.5 Q848.0,454.9 837.6,452.1 M859.9,508.6 Q864.8,507.5 868.9,501.4 M865.2,551.6 Q859.9,559.4 852.1,565.5 M852.1,565.5 Q854.8,560.4 865.2,551.6 M865.2,603.8 Q863.8,615.9 867.1,624.8 M865.2,603.8 Q854.7,612.2 841.6,613.1 M865.2,603.8 Q873.6,611.3 880.3,625.1 M867.1,624.8 Q875.1,621.8 880.3,625.1 M852.0,656.5 Q855.3,664.7 865.0,676.4 M865.0,676.4 Q874.2,665.7 879.3,660.4 M865.0,676.4 Q862.3,668.5 852.0,656.5 M879.5,423.8 Q882.2,433.7 890.8,440.7 M890.8,440.7 Q884.8,431.5 879.5,423.8 M890.8,440.7 Q888.7,461.9 884.2,476.6 M884.2,476.6 Q893.3,483.6 895.9,485.4 M895.9,485.4 Q887.2,484.2 884.2,476.6 M892.0,554.8 Q892.0,567.4 893.0,576.8 M893.0,576.8 Q888.4,584.3 891.1,593.5 M891.1,593.5 Q895.8,586.4 893.0,576.8 M891.1,593.5 Q880.2,601.3 865.2,603.8 M879.3,660.4 Q870.9,668.7 865.0,676.4 M879.3,660.4 Q882.3,638.9 880.3,625.1 M473.3,324.8 Q477.0,337.5 487.0,354.5 M473.3,324.8 Q488.7,317.3 505.2,307.0 M487.0,354.5 Q496.4,356.3 502.4,361.5 M487.0,354.5 Q500.8,346.3 510.3,342.5 M505.2,307.0 Q514.6,305.5 522.6,304.4 M505.2,307.0 Q518.8,299.8 531.6,294.2 M510.3,342.5 Q516.5,343.5 526.3,349.4 M510.3,342.5 Q504.0,349.6 502.4,361.5 M502.4,361.5 Q497.2,355.1 487.0,354.5 M502.4,361.5 Q501.7,369.0 504.6,380.9 M504.6,380.9 Q501.9,371.7 502.4,361.5 M504.6,380.9 Q511.4,386.6 521.8,396.9 M504.6,380.9 Q503.6,394.4 496.4,405.1 M496.4,405.1 Q497.6,395.7 504.6,380.9 M531.6,294.2 Q529.8,296.5 522.6,304.4 M522.6,304.4 Q529.6,298.8 531.6,294.2 M522.6,304.4 Q516.2,307.7 505.2,307.0 M526.3,349.4 Q530.6,343.4 532.9,336.2 M526.3,349.4 Q520.9,349.0 510.3,342.5 M526.3,349.4 Q529.8,356.6 537.5,369.4 M532.9,373.7 Q535.6,369.5 537.5,369.4 M532.9,373.7 Q539.6,381.1 543.8,391.6 M521.8,396.9 Q532.3,397.3 543.8,391.6 M553.3,314.8 Q557.7,306.3 559.6,303.6 M548.3,337.1 Q547.7,341.9 550.8,348.9 M548.3,337.1 Q540.2,335.6 532.9,336.2 M548.3,337.1 Q560.5,340.8 569.1,338.4 M550.8,348.9 Q558.8,346.8 569.1,338.4 M537.5,369.4 Q532.1,358.8 526.3,349.4 M537.5,369.4 Q538.2,382.2 543.8,391.6 M543.8,391.6 Q537.4,383.8 532.9,373.7 M543.8,391.6 Q530.4,392.4 521.8,396.9 M559.6,303.6 Q553.8,309.2 553.3,314.8 M559.6,303.6 Q546.4,299.9 531.6,294.2 M569.1,338.4 Q570.6,350.2 570.9,356.2 M569.1,338.4 Q557.8,339.1 548.3,337.1 M570.9,356.2 Q571.3,348.5 569.1,338.4 M570.9,356.2 Q560.2,350.0 550.8,348.9 M575.5,386.3 Q583.2,380.2 586.5,372.2 M575.5,386.3 Q582.5,397.3 587.8,405.6 M567.0,407.9 Q576.5,409.1 587.8,405.6 M567.0,407.9 Q572.2,394.9 575.5,386.3 M593.9,305.5 Q602.1,309.4 609.0,308.7 M599.7,341.5 Q599.6,341.5 603.5,347.9 M597.2,355.2 Q601.8,350.0 603.5,347.9 M597.2,355.2 Q595.6,345.1 599.7,341.5 M586.5,372.2 Q590.0,362.2 597.2,355.2 M609.0,308.7 Q599.2,306.1 593.9,305.5 M603.5,347.9 Q600.5,347.5 599.7,341.5 M603.5,347.9 Q607.5,341.5 614.5,340.8 M617.6,381.2 Q625.1,375.7 630.0,373.4 M608.3,395.3 Q611.9,388.2 617.6,381.2 M640.7,303.2 Q646.8,308.6 649.6,309.4 M629.1,325.9 Q633.8,334.8 635.7,347.3 M629.1,325.9 Q636.9,316.5 640.7,303.2 M635.7,347.3 Q639.7,351.0 649.4,359.2 M630.0,373.4 Q625.7,375.5 617.6,381.2 M630.0,373.4 Q637.0,367.4 649.4,359.2 M630.0,373.4 Q633.2,358.0 635.7,347.3 M642.5,408.6 Q648.8,405.0 649.4,405.2 M642.5,408.6 Q658.5,402.8 670.1,397.6 M649.6,309.4 Q645.3,305.2 640.7,303.2 M649.6,309.4 Q652.2,318.6 660.7,331.4 M660.7,331.4 Q669.0,324.2 680.9,319.7 M649.4,359.2 Q645.2,351.3 635.7,347.3 M649.4,359.2 Q659.9,362.6 672.9,363.8 M663.4,386.1 Q663.8,391.6 670.1,397.6 M663.4,386.1 Q667.3,378.5 673.3,368.2 M649.4,405.2 Q659.9,400.1 670.1,397.6 M680.9,319.7 Q683.9,324.4 692.3,335.1 M680.9,319.7 Q690.3,313.4 699.5,311.8 M683.2,341.0 Q687.5,336.0 692.3,335.1 M683.2,341.0 Q689.0,347.6 699.8,354.1 M672.9,363.8 Q674.3,365.9 673.3,368.2 M670.1,397.6 Q666.3,389.0 663.4,386.1 M699.5,311.8 Q708.1,313.6 717.4,310.9 M699.5,311.8 Q689.7,317.1 680.9,319.7 M692.3,335.1 Q689.2,336.8 683.2,341.0 M692.3,335.1 Q697.8,341.9 699.8,354.1 M699.8,354.1 Q704.1,357.5 713.2,356.2 M699.8,354.1 Q696.4,341.7 692.3,335.1 M699.7,386.4 Q702.6,389.6 708.1,398.5 M708.1,398.5 Q713.4,403.5 724.2,409.9 M717.4,310.9 Q727.8,312.3 735.3,310.7 M716.8,330.8 Q724.6,334.4 735.2,334.4 M713.2,356.2 Q707.9,353.9 699.8,354.1 M713.2,356.2 Q719.6,365.0 721.7,372.4 M721.7,372.4 Q726.7,372.8 736.1,377.6 M721.7,372.4 Q717.0,363.2 713.2,356.2 M724.2,409.9 Q733.5,409.7 743.4,408.8 M735.3,310.7 Q735.9,321.1 735.2,334.4 M735.2,334.4 Q723.6,330.6 716.8,330.8 M735.2,334.4 Q742.7,340.8 744.2,352.4 M744.2,352.4 Q736.6,343.5 735.2,334.4 M744.2,352.4 Q741.4,368.1 736.1,377.6 M736.1,377.6 Q741.7,367.3 744.2,352.4 M743.4,408.8 Q730.9,406.1 724.2,409.9 M743.4,408.8 Q750.5,403.5 761.2,400.2 M772.1,314.6 Q767.7,325.1 758.0,329.7 M772.1,314.6 Q780.7,322.0 791.7,324.7 M758.0,329.7 Q768.0,320.8 772.1,314.6 M758.0,329.7 Q765.7,337.9 771.7,347.4 M771.7,347.4 Q779.5,357.1 790.9,361.4 M770.0,377.5 Q782.3,376.0 791.3,370.9 M770.0,377.5 Q768.3,390.9 761.2,400.2 M770.0,377.5 Q778.6,384.7 785.3,397.8 M761.2,400.2 Q754.4,402.9 743.4,408.8 M761.2,400.2 Q774.3,398.2 785.3,397.8 M796.0,314.8 Q796.0,317.2 800.9,319.1 M791.7,324.7 Q792.8,322.1 796.0,314.8 M790.9,361.4 Q793.6,363.7 791.3,370.9 M790.9,361.4 Q782.9,355.6 771.7,347.4 M791.3,370.9 Q793.4,369.3 790.9,361.4 M800.9,319.1 Q797.5,314.1 796.0,314.8 M813.1,337.0 Q816.2,338.6 814.0,346.4 M814.0,346.4 Q815.8,343.6 823.4,346.6 M814.0,346.4 Q811.5,341.4 813.1,337.0 M809.2,382.4 Q816.0,378.7 825.4,375.2 M809.2,382.4 Q821.3,389.5 831.7,391.4 M809.0,406.9 Q807.9,393.7 809.2,382.4 M809.0,406.9 Q798.7,401.4 785.3,397.8 M809.0,406.9 Q823.1,399.8 831.7,391.4 M838.7,308.1 Q845.0,302.0 851.5,297.0 M823.4,346.6 Q819.7,348.9 814.0,346.4 M823.4,346.6 Q818.7,341.5 813.1,337.0 M825.4,375.2 Q825.4,380.9 831.7,391.4 M825.4,375.2 Q815.2,377.4 809.2,382.4 M825.4,375.2 Q837.9,381.0 850.2,383.6 M858.8,315.4 Q846.0,311.2 838.7,308.1 M848.3,342.0 Q851.2,348.7 847.9,355.4 M848.3,342.0 Q835.1,337.5 828.3,328.0 M847.9,355.4 Q851.4,349.1 848.3,342.0 M847.9,355.4 Q833.6,353.7 823.4,346.6 M847.9,355.4 Q849.4,371.2 850.2,383.6 M849.5,409.4 Q842.9,401.8 831.7,391.4 M854.2,294.4 Q864.5,299.4 878.0,308.0 M849.3,315.2 Q860.6,322.7 865.4,327.6 M844.3,337.1 Q844.3,349.5 848.8,356.7 M844.3,337.1 Q848.7,327.0 849.3,315.2 M842.8,391.7 Q849.3,398.5 852.1,404.7 M844.4,434.5 Q855.0,431.8 864.3,431.3 M841.2,459.4 Q842.9,444.7 844.4,434.5 M841.2,459.4 Q854.5,455.8 873.9,448.4 M841.2,459.4 Q852.8,445.3 864.3,431.3 M878.0,308.0 Q883.8,315.8 894.2,321.8 M878.0,308.0 Q874.5,319.1 865.4,327.6 M878.0,308.0 Q892.2,305.5 900.7,298.5 M865.4,327.6 Q868.5,334.3 872.8,338.7 M865.4,327.6 Q858.8,320.8 849.3,315.2 M872.8,338.7 Q871.9,333.9 865.4,327.6 M872.8,338.7 Q877.2,344.2 884.1,351.3 M872.8,338.7 Q874.0,352.4 878.4,360.7 M878.4,360.7 Q884.5,357.2 884.1,351.3 M865.6,395.4 Q859.2,402.0 852.1,404.7 M881.4,414.4 Q888.9,411.3 890.4,403.5 M881.4,414.4 Q888.1,423.6 888.4,432.9 M881.4,414.4 Q869.9,422.3 864.3,431.3 M864.3,431.3 Q869.6,442.5 873.9,448.4 M873.9,448.4 Q865.8,440.4 864.3,431.3 M873.9,448.4 Q880.6,452.6 892.2,458.4 M873.9,448.4 Q883.6,441.3 888.4,432.9 M900.7,298.5 Q887.7,304.8 878.0,308.0 M900.7,298.5 Q914.2,293.9 925.8,294.6 M894.2,321.8 Q884.8,312.0 878.0,308.0 M894.2,321.8 Q895.8,312.0 900.7,298.5 M884.1,351.3 Q882.5,357.0 878.4,360.7 M884.1,351.3 Q893.7,361.4 901.3,373.9 M901.3,373.9 Q895.2,382.3 895.2,386.3 M901.3,373.9 Q907.2,380.5 908.9,389.8 M901.3,373.9 Q910.7,371.8 918.7,364.9 M895.2,386.3 Q897.3,382.4 901.3,373.9 M895.2,386.3 Q904.4,386.5 908.9,389.8 M925.8,294.6 Q934.1,292.3 937.5,295.6 M925.8,294.6 Q914.0,299.6 900.7,298.5 M923.3,319.2 Q931.8,322.5 938.4,321.4 M914.7,340.2 Q917.9,327.5 923.3,319.2 M914.7,340.2 Q929.3,341.9 938.2,344.0 M918.7,364.9 Q924.0,366.7 932.7,363.1 M908.9,389.8 Q903.8,388.9 895.2,386.3 M908.9,389.8 Q911.1,397.5 908.6,406.0 M908.6,406.0 Q908.2,397.7 908.9,389.8 M914.4,438.7 Q919.0,448.9 921.3,455.8 M914.4,438.7 Q922.8,437.2 934.7,436.1 M921.3,455.8 Q915.6,448.5 914.4,438.7 M921.3,455.8 Q933.4,455.7 944.7,456.9 M937.5,295.6 Q934.3,294.9 925.8,294.6 M937.5,295.6 Q951.2,301.5 959.3,306.6 M938.4,321.4 Q932.6,320.9 923.3,319.2 M938.2,344.0 Q935.6,331.9 938.4,321.4 M932.7,363.1 Q923.3,364.5 918.7,364.9 M935.7,379.5 Q926.0,369.1 918.7,364.9 M930.1,414.6 Q932.1,428.4 934.7,436.1 M934.7,436.1 Q927.5,438.6 914.4,438.7 M944.7,456.9 Q947.7,459.7 950.2,457.7 M944.7,456.9 Q938.8,447.2 934.7,436.1 M959.3,306.6 Q958.8,311.2 960.9,312.9 M959.3,306.6 Q971.0,313.2 980.0,318.6 M960.9,312.9 Q970.8,313.8 980.0,318.6 M960.9,312.9 Q947.1,319.4 938.4,321.4 M965.6,343.5 Q975.7,343.8 983.4,338.4 M960.2,370.2 Q949.3,371.6 935.7,379.5 M960.2,370.2 Q958.9,383.1 963.5,397.0 M963.5,397.0 Q971.1,396.6 977.8,402.8 M962.4,403.2 Q962.0,401.5 963.5,397.0 M962.4,403.2 Q970.3,400.9 977.8,402.8 M962.4,403.2 Q973.2,400.3 983.0,391.0 M963.0,436.9 Q952.3,449.4 944.7,456.9 M950.2,457.7 Q946.7,460.5 944.7,456.9 M950.2,457.7 Q953.5,447.9 963.0,436.9 M984.5,303.5 Q995.3,298.0 1002.8,295.5 M984.5,303.5 Q992.1,307.1 1004.4,312.5 M980.0,318.6 Q985.2,314.3 984.5,303.5 M983.4,338.4 Q975.5,338.8 965.6,343.5 M983.4,338.4 Q982.0,327.6 980.0,318.6 M983.4,338.4 Q988.3,347.2 988.0,359.2 M988.0,359.2 Q994.2,352.2 1005.0,349.8 M988.0,359.2 Q991.7,368.9 1000.5,374.7 M977.8,402.8 Q980.8,396.3 983.0,391.0 M990.0,441.4 Q974.8,436.8 963.0,436.9 M1002.8,295.5 Q1001.9,306.2 1004.4,312.5 M1004.4,312.5 Q1005.8,304.6 1002.8,295.5 M1004.4,312.5 Q1009.9,321.0 1016.3,329.7 M1005.0,349.8 Q1011.6,348.0 1021.8,343.9 M996.4,383.1 Q1001.3,379.6 1000.5,374.7 M1006.2,411.3 Q1007.0,418.7 1011.1,422.4 M1011.1,422.4 Q1015.6,421.7 1022.3,426.4 M1032.1,302.5 Q1033.4,310.6 1040.2,314.9 M1032.1,302.5 Q1044.4,306.5 1057.3,308.1 M1016.3,329.7 Q1017.8,335.7 1021.8,343.9 M1016.3,329.7 Q1011.7,320.7 1004.4,312.5 M1021.8,343.9 Q1019.1,340.1 1016.3,329.7 M1021.8,343.9 Q1015.0,348.9 1005.0,349.8 M1034.7,363.6 Q1040.4,355.4 1049.0,353.4 M1030.7,402.9 Q1039.4,406.5 1047.9,414.6 M1030.7,402.9 Q1023.7,393.6 1017.6,382.3 M1057.3,308.1 Q1056.3,309.8 1061.8,315.3 M1057.3,308.1 Q1059.3,300.1 1062.6,296.1 M1040.2,314.9 Q1035.1,307.2 1032.1,302.5 M1040.2,314.9 Q1049.9,309.7 1057.3,308.1 M1049.0,353.4 Q1050.7,358.5 1053.4,359.0 M1049.0,353.4 Q1052.1,344.2 1060.9,340.6 M1053.4,359.0 Q1054.0,353.6 1049.0,353.4 M1053.4,359.0 Q1044.0,359.3 1034.7,363.6 M1054.7,378.9 Q1062.4,379.2 1069.3,380.2 M1054.7,378.9 Q1047.3,368.8 1034.7,363.6 M1047.9,414.6 Q1055.9,408.4 1064.0,407.2 M1062.6,296.1 Q1060.5,305.2 1057.3,308.1 M1061.8,315.3 Q1061.5,308.9 1057.3,308.1 M1073.8,359.4 Q1070.7,371.2 1069.3,380.2 M1069.3,380.2 Q1071.2,367.7 1073.8,359.4 M1064.0,407.2 Q1068.1,396.1 1069.3,380.2 M867.1,806.8 Q873.2,811.4 879.5,815.5 M867.1,806.8 Q873.9,804.5 882.5,801.9 M883.4,792.8 Q883.8,791.7 887.3,791.5 M882.5,801.9 Q884.7,795.6 883.4,792.8 M882.5,801.9 Q885.2,806.4 886.9,810.0 M882.5,801.9 Q886.1,796.6 887.3,791.5 M879.5,815.5 Q884.6,812.5 886.9,810.0 M879.5,815.5 Q881.5,810.2 882.5,801.9 M887.3,791.5 Q885.9,792.7 883.4,792.8 M886.9,810.0 Q884.8,805.0 882.5,801.9 M886.9,810.0 Q893.4,811.0 903.1,815.0 M908.3,796.8 Q907.4,800.7 908.0,804.3 M908.0,804.3 Q906.7,801.4 908.3,796.8 M903.1,815.0 Q903.9,810.5 908.0,804.3 M914.6,788.9 Q912.0,793.7 908.3,796.8 M914.6,788.9 Q923.7,790.2 929.9,794.2 M920.4,804.3 Q922.3,804.7 925.8,801.8 M920.4,804.3 Q924.9,798.3 929.9,794.2 M929.9,794.2 Q935.0,794.1 939.1,791.5 M925.8,801.8 Q923.3,804.3 920.4,804.3 M925.8,801.8 Q928.1,798.5 929.9,794.2 M925.8,801.8 Q931.6,798.2 939.1,791.5 M936.9,779.0 Q937.8,786.2 939.1,791.5 M939.1,791.5 Q933.3,791.6 929.9,794.2 M939.1,791.5 Q940.9,797.4 944.3,800.9 M944.3,800.9 Q941.4,794.5 939.1,791.5 M945.3,814.2 Q949.9,812.1 953.3,808.0 M945.3,814.2 Q944.6,808.5 944.3,800.9 M945.3,814.2 Q952.8,810.7 963.3,805.1 M955.0,768.8 Q955.4,773.3 957.3,776.2 M955.0,768.8 Q955.1,772.2 958.6,776.6 M955.0,768.8 Q957.9,767.2 963.6,765.9 M957.3,776.2 Q956.2,776.4 958.6,776.6 M950.7,790.1 Q956.3,791.0 959.6,791.6 M969.3,752.6 Q974.4,753.5 979.9,753.9 M969.3,752.6 Q976.4,760.3 980.1,767.5 M963.6,765.9 Q959.8,766.6 955.0,768.8 M958.6,776.6 Q956.5,774.8 957.3,776.2 M959.6,791.6 Q955.9,790.0 950.7,790.1 M959.6,791.6 Q961.4,797.2 963.3,805.1 M963.3,805.1 Q965.7,807.3 971.5,809.9 M963.3,805.1 Q969.1,809.5 974.6,812.8 M980.1,767.5 Q982.7,767.2 986.5,767.9 M980.1,767.5 Q982.9,765.9 987.1,761.9 M974.2,782.2 Q975.0,786.1 976.7,790.7 M974.2,782.2 Q980.7,781.7 984.3,782.8 M976.7,790.7 Q977.0,785.6 974.2,782.2 M976.7,790.7 Q981.6,787.1 984.3,782.8 M971.5,809.9 Q971.7,811.5 974.6,812.8 M987.1,761.9 Q985.1,764.3 980.1,767.5 M986.5,767.9 Q987.6,763.5 987.1,761.9 M986.5,767.9 Q981.9,767.6 980.1,767.5 M984.3,782.8 Q988.7,787.2 989.8,792.4 M989.8,792.4 Q987.3,789.3 984.3,782.8 M989.8,792.4 Q994.9,794.3 1001.6,795.1 M987.0,802.1 Q988.4,796.1 989.8,792.4 M987.0,802.1 Q993.8,806.0 997.4,806.6 M987.0,802.1 Q983.6,796.3 976.7,790.7 M997.0,750.0 Q998.5,755.3 1002.0,758.9 M1002.0,758.9 Q1002.3,763.0 1000.0,768.7 M1002.0,758.9 Q999.4,753.8 997.0,750.0 M1000.0,768.7 Q999.8,771.9 996.7,777.5 M1000.0,768.7 Q1001.1,762.6 1002.0,758.9 M996.7,777.5 Q997.1,773.3 1000.0,768.7 M1001.6,795.1 Q1005.2,801.0 1009.0,804.4 M1001.6,795.1 Q994.4,793.9 989.8,792.4 M997.4,806.6 Q991.4,802.8 987.0,802.1 M997.4,806.6 Q1002.1,807.0 1009.0,804.4 M1008.0,744.8 Q1009.6,748.8 1013.3,753.1 M1008.0,744.8 Q1006.0,750.4 1002.0,758.9 M1013.3,753.1 Q1016.2,754.7 1019.8,758.2 M1013.3,753.1 Q1010.5,748.6 1008.0,744.8 M1009.9,770.9 Q1013.5,771.5 1019.0,773.7 M1012.5,782.3 Q1015.3,779.7 1019.0,773.7 M1015.0,793.8 Q1019.2,795.6 1021.5,796.7 M1009.0,804.4 Q1004.3,804.2 997.4,806.6 M1009.0,804.4 Q1004.4,799.4 1001.6,795.1 M1009.0,804.4 Q1010.9,799.8 1015.0,793.8 M1027.5,746.7 Q1032.3,749.3 1036.4,748.9 M1027.5,746.7 Q1023.9,751.8 1019.8,758.2 M1019.8,758.2 Q1014.8,754.7 1013.3,753.1 M1019.8,758.2 Q1027.1,761.4 1032.8,761.3 M1019.0,773.7 Q1016.0,773.3 1009.9,770.9 M1029.1,783.5 Q1031.5,780.1 1034.2,776.3 M1029.1,783.5 Q1031.8,789.6 1031.4,794.3 M1020.5,808.5 Q1021.3,809.1 1024.2,811.8 M1020.5,808.5 Q1021.6,801.5 1021.5,796.7 M1024.2,811.8 Q1022.2,811.2 1020.5,808.5 M1024.2,811.8 Q1029.5,812.0 1033.8,814.6 M1032.8,761.3 Q1032.0,760.9 1034.3,763.9 M1034.3,763.9 Q1033.5,761.1 1032.8,761.3 M1034.3,763.9 Q1039.0,761.4 1045.6,761.6 M1034.2,776.3 Q1038.9,776.4 1045.1,776.6 M1034.2,776.3 Q1033.9,770.6 1034.3,763.9 M1031.4,794.3 Q1031.0,798.2 1031.9,801.3 M1033.8,814.6 Q1030.3,814.5 1024.2,811.8 M1052.0,738.3 Q1051.4,744.5 1047.4,748.2 M1052.0,738.3 Q1058.8,740.8 1064.9,742.6 M1052.0,738.3 Q1058.7,740.4 1068.9,743.4 M1047.4,748.2 Q1049.3,744.9 1052.0,738.3 M1045.6,761.6 Q1047.1,765.1 1051.4,771.5 M1045.6,761.6 Q1039.9,762.5 1034.3,763.9 M1045.6,761.6 Q1037.5,762.3 1032.8,761.3 M1051.4,771.5 Q1055.7,773.1 1057.3,771.1 M1051.4,771.5 Q1046.6,775.4 1045.1,776.6 M1051.4,771.5 Q1055.7,774.0 1058.9,778.0 M1045.1,776.6 Q1049.4,775.5 1051.4,771.5 M1052.6,793.6 Q1054.2,795.6 1056.9,797.9 M1052.6,793.6 Q1054.2,799.8 1058.6,805.1 M1049.2,808.9 Q1053.3,807.2 1058.6,805.1 M1064.9,742.6 Q1068.4,743.2 1068.9,743.4 M1064.9,742.6 Q1056.8,740.3 1052.0,738.3 M1064.9,742.6 Q1070.7,737.9 1076.1,731.5 M1062.6,760.6 Q1059.9,766.3 1057.3,771.1 M1062.6,760.6 Q1068.7,760.4 1074.5,758.7 M1058.9,778.0 Q1057.2,776.0 1057.3,771.1 M1056.9,797.9 Q1053.8,795.3 1052.6,793.6 M1056.9,797.9 Q1056.8,802.2 1058.6,805.1 M1058.6,805.1 Q1059.7,807.2 1060.0,811.9 M1058.6,805.1 Q1058.9,800.1 1056.9,797.9 M1060.0,811.9 Q1058.9,807.9 1058.6,805.1 M1060.0,811.9 Q1053.4,810.6 1049.2,808.9 M1060.0,811.9 Q1060.0,803.2 1056.9,797.9 M1076.1,731.5 Q1079.9,731.3 1081.6,734.5 M1074.5,758.7 Q1078.3,759.6 1083.3,763.6 M1071.0,769.3 Q1071.4,763.3 1074.5,758.7 M1071.0,769.3 Q1067.1,763.6 1062.6,760.6 M1071.0,769.3 Q1078.2,766.5 1083.3,763.6 M1068.3,785.5 Q1069.9,790.5 1071.7,793.1 M1071.7,793.1 Q1069.0,787.5 1068.3,785.5 M1071.7,793.1 Q1074.7,798.6 1075.1,801.7 M1075.1,801.7 Q1072.3,797.2 1071.7,793.1 M1074.4,815.4 Q1076.5,807.2 1075.1,801.7 M1074.4,815.4 Q1078.6,811.6 1085.1,806.4 M1081.6,734.5 Q1080.1,733.2 1076.1,731.5 M1081.6,734.5 Q1081.9,738.2 1083.8,743.7 M1081.6,734.5 Q1073.9,740.2 1068.9,743.4 M1083.8,743.7 Q1085.0,749.4 1084.8,754.0 M1083.3,763.6 Q1088.9,763.5 1092.6,764.7 M1083.3,763.6 Q1082.6,758.0 1084.8,754.0 M1087.2,778.3 Q1092.2,779.9 1095.0,781.1 M1087.2,778.3 Q1089.5,782.7 1092.2,790.0 M1087.2,778.3 Q1089.6,770.4 1092.6,764.7 M1087.6,793.6 Q1088.4,792.7 1092.2,790.0 M1085.1,806.4 Q1087.2,809.1 1092.2,813.6 M1085.1,806.4 Q1081.4,803.7 1075.1,801.7 M1085.1,806.4 Q1086.2,798.3 1087.6,793.6 M1099.1,734.9 Q1102.3,734.5 1107.7,733.4 M1099.1,734.9 Q1099.0,739.1 1099.4,744.3 M1099.4,744.3 Q1103.5,745.4 1107.3,745.0 M1099.4,744.3 Q1103.2,738.1 1107.7,733.4 M1092.6,764.7 Q1094.6,762.5 1097.9,761.9 M1092.6,764.7 Q1088.5,764.1 1083.3,763.6 M1095.0,781.1 Q1091.0,780.0 1087.2,778.3 M1092.2,790.0 Q1092.8,784.1 1095.0,781.1 M1092.2,790.0 Q1097.6,787.9 1103.0,783.9 M1100.0,803.8 Q1102.5,804.8 1105.0,808.0 M1092.2,813.6 Q1090.3,809.4 1085.1,806.4 M1092.2,813.6 Q1096.6,808.9 1100.0,803.8 M1092.2,813.6 Q1099.4,809.3 1105.0,808.0 M1107.7,733.4 Q1102.7,734.2 1099.1,734.9 M1107.3,745.0 Q1110.8,749.4 1111.6,751.8 M1107.3,745.0 Q1107.9,739.6 1107.7,733.4 M1111.6,751.8 Q1115.7,755.4 1121.5,759.1 M1112.6,765.8 Q1114.1,769.4 1116.3,769.5 M1108.8,793.4 Q1111.5,799.0 1115.1,802.3 M1108.8,793.4 Q1104.2,798.3 1100.0,803.8 M1105.0,808.0 Q1103.1,804.4 1100.0,803.8 M1105.0,808.0 Q1110.5,806.9 1115.1,802.3 M1121.6,731.6 Q1125.0,730.9 1129.3,730.8 M1121.6,731.6 Q1122.1,737.6 1119.8,740.3 M1119.8,740.3 Q1120.2,734.5 1121.6,731.6 M1119.8,740.3 Q1124.1,742.0 1131.6,743.6 M1119.8,740.3 Q1113.4,744.4 1107.3,745.0 M1121.5,759.1 Q1125.3,762.8 1127.8,766.0 M1121.5,759.1 Q1116.2,762.9 1112.6,765.8 M1121.5,759.1 Q1120.7,763.7 1116.3,769.5 M1116.3,769.5 Q1119.4,772.9 1122.5,776.7 M1116.3,769.5 Q1120.6,764.5 1121.5,759.1 M1122.5,776.7 Q1125.2,779.1 1126.7,779.2 M1123.7,797.0 Q1126.7,797.5 1127.8,795.1 M1115.1,802.3 Q1119.2,799.8 1123.7,797.0 M1115.1,802.3 Q1110.3,796.3 1108.8,793.4 M1115.5,814.3 Q1114.9,809.8 1115.1,802.3 M1115.5,814.3 Q1109.5,809.6 1105.0,808.0 M1129.3,730.8 Q1124.5,729.6 1121.6,731.6 M1129.3,730.8 Q1130.4,735.6 1131.6,743.6 M1131.6,743.6 Q1137.2,741.2 1142.0,740.4 M1135.1,759.4 Q1138.0,764.8 1143.4,768.3 M1127.8,766.0 Q1123.4,763.3 1121.5,759.1 M1127.8,766.0 Q1132.6,763.7 1135.1,759.4 M1127.8,795.1 Q1125.8,796.6 1123.7,797.0 M1135.0,810.4 Q1139.4,809.1 1143.0,809.2 M1128.9,812.0 Q1131.7,812.5 1135.0,810.4 M1142.0,740.4 Q1144.6,736.9 1148.7,731.8 M1148.8,757.1 Q1147.2,764.5 1143.4,768.3 M1148.8,757.1 Q1143.6,750.1 1142.0,740.4 M1143.4,768.3 Q1139.9,764.3 1135.1,759.4 M1143.7,789.5 Q1145.3,785.4 1146.9,784.6 M1143.7,789.5 Q1134.7,792.2 1127.8,795.1 M1143.0,809.2 Q1138.3,810.5 1135.0,810.4"/>
<g fill="none" stroke-linecap="round" stroke-linejoin="round">
<polyline points="889,120.8 906.3,145 927,146.7 954.6,131 984,129.4" stroke="#fce9bc" stroke-width="1.3"/>
<polyline points="940.8,82.8 966.7,108.7 987.4,112" stroke="#fce9bc" stroke-width="1.3"/>
<polyline points="915,150 904.6,190" stroke="#fce9bc" stroke-width="1.3"/>
<polyline points="1028,260.4 1037.5,247.7 1047,236.6 1064.6,235 1072.5,238.2" stroke="#fce9bc" stroke-width="1.3"/>
<polyline points="996.2,200 997.8,215.9 996.2,247.7" stroke="#fce9bc" stroke-width="1.3"/>
<polyline points="1012,268.4 1028,260.4" stroke="#fce9bc" stroke-width="1.3"/>
<polyline points="920,120 940,150 960,200 950,230" stroke="#fce9bc" stroke-width="1.1"/>
<polyline points="1020,200 1040,220 1050,250 1060,270" stroke="#fce9bc" stroke-width="1.1"/>
<polyline points="1100,150 1110,200 1120,230" stroke="#fce9bc" stroke-width="1.1"/>
<polyline points="900,250 930,270 960,290 990,300" stroke="#fce9bc" stroke-width="1.1"/>
<polyline points="1000,100 1030,120 1050,120" stroke="#fce9bc" stroke-width="1.1"/>
<polyline points="880,140 900,150 910,180" stroke="#fce9bc" stroke-width="1.1"/>
<polyline points="722,303.6 717.8,335.5 710.8,363.3 706.6,380" stroke="#fce9bc" stroke-width="1.3"/>
<polyline points="837,339.7 842.6,357.7 839.9,374.4" stroke="#fce9bc" stroke-width="1.3"/>
<polyline points="535,373 540,350 549,329 560,310" stroke="#fce9bc" stroke-width="1.3"/>
<polyline points="519,363 535,373 560,380 590,382" stroke="#fce9bc" stroke-width="1.3"/>
<polyline points="470,317 490,330 510,340 535,340 570,345 600,350 630,350" stroke="#fce9bc" stroke-width="1.1"/>
<polyline points="512.5,646.6 539.5,651.4 558.6,657 580,655" stroke="#fce9bc" stroke-width="1.3"/>
<polyline points="534.8,618 542.7,629 534.8,657.7 520.4,673.6" stroke="#fce9bc" stroke-width="1.3"/>
<polyline points="510,530 530,540 550,530" stroke="#fce9bc" stroke-width="1.1"/>
<polyline points="500,620 520,630 540,620 560,630" stroke="#fce9bc" stroke-width="1.1"/>
<polyline points="520,580 540,590 560,585" stroke="#fce9bc" stroke-width="1.1"/>
<polyline points="643.5,463.5 618.4,476.3 600,489.2" stroke="#fce9bc" stroke-width="1.4"/>
<polyline points="643.5,463.5 673.5,470.8 691.8,478.2 719.4,472.7" stroke="#fce9bc" stroke-width="1.4"/>
<polyline points="643.5,463.5 644,491 636.7,518.6 624,540 609,560 607,594" stroke="#fce9bc" stroke-width="1.4"/>
<polyline points="732,492.9 728.6,518.6 724,535.1" stroke="#fce9bc" stroke-width="1.3"/>
<polyline points="719.4,492.9 682.7,507.6 655,518.6 622,529.6 600,533.3" stroke="#fce9bc" stroke-width="1.3"/>
<polyline points="600,415.7 636.7,421.2 673.5,426.7" stroke="#fce9bc" stroke-width="1.3"/>
<polyline points="739.6,390 741.4,419.4 752.5,445" stroke="#fce9bc" stroke-width="1.3"/>
<polyline points="628.3,691.2 629.8,720" stroke="#fce9bc" stroke-width="1.4"/>
<polyline points="686.7,660.4 692.3,683.9 703.3,720" stroke="#fce9bc" stroke-width="1.3"/>
<polyline points="633.5,698.6 688.6,702.3 720,706" stroke="#fce9bc" stroke-width="1.3"/>
<polyline points="700,652.5 729.4,648.6 754.8,650.5 770,640" stroke="#fce9bc" stroke-width="1.4"/>
<polyline points="729,592 740,620 736,667" stroke="#fce9bc" stroke-width="1.3"/>
<polyline points="830,592 850,600 870,580 900,561" stroke="#fce9bc" stroke-width="1.3"/>
<polyline points="743,500 760,540 790,570 830,592" stroke="#fce9bc" stroke-width="1.3"/>
<polyline points="743,500 729,560" stroke="#fce9bc" stroke-width="1.3"/>
<polyline points="760,470 800,470 860,480 900,470 950,450" stroke="#fce9bc" stroke-width="1.3"/>
<polyline points="800,420 850,410 900,400 960,400 1000,390 1030,385" stroke="#fce9bc" stroke-width="1.3"/>
<polyline points="880,350 900,380 920,400 950,420" stroke="#fce9bc" stroke-width="1.3"/>
<polyline points="1000,345 1010,380 1030,410 1060,418" stroke="#fce9bc" stroke-width="1.3"/>
<polyline points="1060,397 1060,420" stroke="#fce9bc" stroke-width="1.3"/>
<polyline points="920,560 880,560 850,560" stroke="#fce9bc" stroke-width="1.1"/>
<polyline points="600,620 640,630 680,620 720,610" stroke="#fce9bc" stroke-width="1.1"/>
<polyline points="580,540 620,560 660,570 700,580" stroke="#fce9bc" stroke-width="1.1"/>
<polyline points="650,600 700,600 760,610 800,600" stroke="#fce9bc" stroke-width="1.1"/>
<polyline points="893.6,204.5 881.4,217.5 881.4,231.8 871.8,255.7 860.7,279.5 849.5,293.8 840,303.4" stroke="#fdd988" stroke-width="2.2"/>
<polyline points="893.6,204.5 900.4,215.9 913.2,224.7 930.7,233.4 937,243 951.3,249.3 972,258.8 984.7,265.2 992.7,288.3" stroke="#fdd988" stroke-width="2.4"/>
<polyline points="984.7,265.2 994.3,247.7 995.9,215.9 999,181.2 995.5,155.3 985.7,134.6 987.4,112 990.9,86.3 994.3,69" stroke="#fdd988" stroke-width="2.4"/>
<polyline points="992.7,288.3 983.1,305 967.2,317.7 938.6,320.9 911.6,309.7 887.7,297 863.9,293 852.7,297 840,301.8" stroke="#fdd988" stroke-width="2.2"/>
<polyline points="994.6,288.3 1001,301.8 1016.9,309.7 1040.7,316.1 1063,318.5 1072.5,314.5 1085.2,305 1091.6,295.4 1091.6,285.9 1082,266.8 1071,254 1072.5,238.2 1082,223.9 1083.7,209.5 1076.7,181 1081.9,158.8 1073.2,138.6 1075,115.6 1071.5,101.8 1056,93.2 1050.8,86.3 1049,69" stroke="#fdd988" stroke-width="2.4"/>
<polyline points="1067.8,317.7 1085.2,308 1101,295.4 1112.3,287.5 1128.2,281 1144,271.6 1153,260.4" stroke="#fdd988" stroke-width="2.4"/>
<polyline points="1067.8,317.7 1066,330" stroke="#fdd988" stroke-width="2.0"/>
<polyline points="893.9,204.1 899.4,189.8 894.2,165.6 889,138 897.7,112 906.3,96.6 916.6,91.4 937.4,79.4 944.3,69" stroke="#fdd988" stroke-width="2.4"/>
<polyline points="864.9,69 866.6,86.3 878.7,91.4 902.8,94.9" stroke="#fdd988" stroke-width="2.0"/>
<polyline points="920,193.3 940.8,188 958,181.2 984,179.5 1002.4,170.9 1023,160.5 1045.6,148.4 1057.7,138 1073.2,138.6" stroke="#fdd988" stroke-width="2.4"/>
<polyline points="1076.7,134.6 1100.9,129.4 1126.8,131.2 1153,127.7" stroke="#fdd988" stroke-width="2.2"/>
<polyline points="1126.8,131.2 1128.5,146.7 1140.6,165.7 1153,158.8" stroke="#fdd988" stroke-width="1.8"/>
<polyline points="980,108.7 1014.5,108.7 1049,96.6 1069.8,96.6 1100.9,86.3 1126.8,88 1153,94.9" stroke="#fdd988" stroke-width="1.6"/>
<polyline points="911.6,227 910,239.8 903.6,263.6 908.4,279.5 906.8,295.4 898.8,301.8 902,311.3 892.5,317.7 891,330" stroke="#fdd988" stroke-width="1.8"/>
<polyline points="868.6,219 881.4,217.5" stroke="#fdd988" stroke-width="1.6"/>
<polyline points="690,305 724.7,303.6 745.5,300.8 773.3,307.8 801,312 821.8,309.8 850,300.8" stroke="#fdd988" stroke-width="2.0"/>
<polyline points="777.4,311.6 777.4,324.4 784.4,338.3 788.5,352.2 787,363.3" stroke="#fdd988" stroke-width="1.6"/>
<polyline points="808,339.7 828.8,335.5 850,343.8 880,350 920,352 960,350 1000,345" stroke="#fdd988" stroke-width="1.6"/>
<polyline points="773.3,357.7 745.5,368.8 717.8,374.4 690,377 660,385 640,392" stroke="#fdd988" stroke-width="1.6"/>
<polyline points="564,292 590,300 612,298 643,298 670,302 690,305" stroke="#fdd988" stroke-width="1.6"/>
<polyline points="634,305 640,330 648,355 660,380 675.3,428.6" stroke="#fdd988" stroke-width="1.6"/>
<polyline points="494.5,380 516.5,380 543.4,389.8 555.7,400.8 571.6,392 600,392 640,392" stroke="#fdd988" stroke-width="1.8"/>
<polyline points="499,453 494.5,429 492,410.6 495.7,396 494.5,380 500,350 510,320 520,300" stroke="#fdd988" stroke-width="1.8"/>
<polyline points="506.7,432.6 525,431.4 546,427.7 553,408 558,404.5" stroke="#fdd988" stroke-width="1.8"/>
<polyline points="558,404.5 547,420 543.4,441 533.6,480" stroke="#fdd988" stroke-width="1.8"/>
<polyline points="546,438.8 576.5,425.3 588.7,408" stroke="#fdd988" stroke-width="1.4"/>
<polyline points="496.5,480 491.4,509 486.3,531.4 474.3,562.2 470.8,582.8 472.5,607.6" stroke="#fdd988" stroke-width="2.0"/>
<polyline points="563.3,486.9 556.5,514.3 548,541.7 539.4,555.4 508.5,558.8 494.8,560.5" stroke="#fdd988" stroke-width="1.8"/>
<polyline points="491.4,485 540,486 585.6,486.9 618.4,476.3 643.5,463.5" stroke="#fdd988" stroke-width="1.8"/>
<polyline points="482.8,610.2 517,603.3 542.8,600 579.6,597.9 615,592 633.5,584.7 642.7,570 664,545 690,520 720,493" stroke="#fdd988" stroke-width="1.8"/>
<polyline points="539.4,555.4 556.5,576 554.8,598" stroke="#fdd988" stroke-width="1.4"/>
<polyline points="496.5,565.7 498.2,582.8 482.8,591.4" stroke="#fdd988" stroke-width="1.4"/>
<polyline points="503,619.5 504.5,641.8 515.7,654.5 520.4,673.6 514,692.7" stroke="#fdd988" stroke-width="1.8"/>
<polyline points="491.8,705.4 523.6,707 547.5,703.8 568.2,699 587.2,695.9 628.3,691.2 661,683.9 686.7,660.4 720,647" stroke="#fdd988" stroke-width="1.8"/>
<polyline points="689.5,419.4 697.4,445 695.5,467 710,474.5 728.6,469" stroke="#fdd988" stroke-width="1.6"/>
<polyline points="643.5,463.5 660.6,439.6 675.3,428.6 689.5,419.4" stroke="#fdd988" stroke-width="1.4"/>
<polyline points="600,393.7 642.2,393.7" stroke="#fdd988" stroke-width="1.8"/>
<polyline points="628.3,691.2 615,652.7 609.6,625 607.8,610.4 607,594" stroke="#fdd988" stroke-width="1.5"/>
<polyline points="736.2,666.2 745,682 745.4,704" stroke="#fdd988" stroke-width="1.4"/>
<polyline points="745.4,704 778.4,705.4 801.9,705.4 825.4,693.6 837,672" stroke="#fdd988" stroke-width="1.5"/>
<polyline points="758.8,689.7 788,674 817.5,664.2 847,654.4 866,653.8 884,644.6 896.9,631.3 888,609.4 876.3,595.7 870.4,580" stroke="#fdd988" stroke-width="1.6"/>
<polyline points="829.3,589.8 841,625 854.8,638.8 866,653.8" stroke="#fdd988" stroke-width="1.5"/>
<polyline points="704.9,731.8 751,732.8 798,725 825.4,721 841,697.5 876.3,678 892,658.4" stroke="#fdd988" stroke-width="1.8"/>
<polyline points="1060,418 1030,440 1003,448 980,458 963,472 949,490 936,510 921,522 915,535 907,550 904,560 906,577 916,594" stroke="#fdd988" stroke-width="2.0"/>
<polyline points="882,801 907.5,798.6 933,794 972,775.6 1010.5,765 1036,754.9 1062,744.5 1088,741.8 1114,749.7 1153,760" stroke="#fdd988" stroke-width="1.8"/>
<polyline points="1000,741.5 1041.4,741.5 1072,731 1100,735 1130,732 1153,735" stroke="#fdd988" stroke-width="1.6"/>
<polyline points="972,754 980,780 990,814.6" stroke="#fdd988" stroke-width="1.4"/>
<polyline points="1075,765 1070,790 1065,817" stroke="#fdd988" stroke-width="1.4"/>
<polyline points="1114,741.8 1120,780 1130,817" stroke="#fdd988" stroke-width="1.4"/>
<polyline points="900,817 930,805 960,800 1000,795 1040,800 1080,790 1120,795 1153,790" stroke="#fdd988" stroke-width="1.3"/>
<polyline points="638,792 650,790 660,800 665,817" stroke="#fdd988" stroke-width="1.5"/>
<polyline points="613,745 620,755 640,758 660,750 690,740" stroke="#fdd988" stroke-width="1.5"/>
</g>
<g fill="none" stroke="#8a8a8a" stroke-width="1.2" stroke-linejoin="round">
<polyline points="484.8,402.5 518.6,386.8 525.4,398 521,407 557,407 570.5,398 595,398 599.8,413.8 617.8,425 608.8,436.4 595,445.4 581.8,459 588.5,481.5 583.9,505.7 577,514.3 583.9,531.4 575.3,546.8 551.3,547.7 560,558.8 566.8,576 577,584.5 580.5,596.5 572,610 563,622 580.9,640.2 577.7,651.4 565,654.5 552.2,681.6 558.6,705.4"/>
<polyline points="826,305 840,309 860.8,325.8 881.6,332 894,342.4 906.6,340.4 923,348.7 937.8,348.7 954.5,340.4 969,342.4 985.7,348.7 996,357 1012.8,365.3 1023,371.6 1044,371.6 1060.7,365.3 1077,365.3"/>
</g>
<g fill="#f0f0f0" stroke="#4a4a4a" stroke-width="1.5">
<circle cx="865.2" cy="111.3" r="2.9"/>
<circle cx="983.7" cy="134.6" r="2.9"/>
<circle cx="1073.2" cy="138.6" r="2.9"/>
<circle cx="893.8" cy="204.3" r="2.9"/>
<circle cx="992.8" cy="288.3" r="2.9"/>
<circle cx="1112.3" cy="287.5" r="2.9"/>
<circle cx="1060.4" cy="397.3" r="2.9"/>
<circle cx="1028.7" cy="436.4" r="2.9"/>
<circle cx="983" cy="453.4" r="2.9"/>
<circle cx="643.3" cy="293" r="2.9"/>
<circle cx="633.8" cy="304.5" r="2.9"/>
<circle cx="647.8" cy="355.4" r="2.9"/>
<circle cx="734.4" cy="298" r="2.9"/>
<circle cx="777.4" cy="311.6" r="2.9"/>
<circle cx="824.6" cy="307.8" r="2.9"/>
<circle cx="789.2" cy="339" r="2.9"/>
<circle cx="689.5" cy="419.4" r="2.9"/>
<circle cx="643.5" cy="463.5" r="2.9"/>
<circle cx="498.2" cy="451.6" r="2.9"/>
<circle cx="493.2" cy="380.6" r="2.9"/>
<circle cx="497.4" cy="367" r="2.9"/>
<circle cx="535" cy="373" r="2.9"/>
<circle cx="509" cy="512.9" r="2.9"/>
<circle cx="579.5" cy="598" r="2.9"/>
<circle cx="580.6" cy="699.5" r="2.9"/>
<circle cx="517" cy="709.7" r="2.9"/>
<circle cx="532" cy="713.7" r="2.9"/>
<circle cx="628.3" cy="691.2" r="2.9"/>
<circle cx="686.7" cy="660.4" r="2.9"/>
<circle cx="745.4" cy="704" r="2.9"/>
<circle cx="800.9" cy="726" r="2.9"/>
<circle cx="866" cy="653.8" r="2.9"/>
<circle cx="897.9" cy="631.8" r="2.9"/>
<circle cx="915.5" cy="619" r="2.9"/>
<circle cx="903.4" cy="560.8" r="2.9"/>
<circle cx="724" cy="535.1" r="2.9"/>
<circle cx="704.9" cy="731.8" r="2.9"/>
<circle cx="635.2" cy="790.9" r="2.9"/>
<circle cx="1052" cy="554.3" r="2.9"/>
<circle cx="918" cy="528" r="2.9"/>
</g>
<circle cx="472.5" cy="607.6" r="3.8" fill="#fff" stroke="#222" stroke-width="1.6"/><circle cx="472.5" cy="607.6" r="1.6" fill="#222"/>
<circle cx="1073" cy="731.6" r="3.8" fill="#fff" stroke="#222" stroke-width="1.6"/><circle cx="1073" cy="731.6" r="1.6" fill="#222"/>
<g font-family="Liberation Sans, sans-serif" stroke="rgba(255,255,255,0.85)" stroke-width="2.8" stroke-linejoin="round" fill="none">
<text x="997.3" y="86.5" font-size="22.5" font-weight="bold" text-anchor="start" style="letter-spacing:3.7px">France</text>
<text x="833" y="105.2" font-size="12" font-weight="normal" text-anchor="start" style="letter-spacing:0.18px">La Rochelle</text>
<text x="959.8" y="128.5" font-size="12" font-weight="normal" text-anchor="start" style="letter-spacing:0.2px">Limoges</text>
<text x="1024" y="131.2" font-size="12" font-weight="normal" text-anchor="start" style="letter-spacing:0.3px">Clermont-Ferrand</text>
<text x="1142.3" y="131.2" font-size="14" font-weight="bold" text-anchor="start" style="">Ly</text>
<text x="867.5" y="197.6" font-size="12" font-weight="normal" text-anchor="start" style="letter-spacing:0.28px">Bordeaux</text>
<text x="960.4" y="280.8" font-size="15" font-weight="normal" text-anchor="start" style="letter-spacing:0.95px">Toulouse</text>
<text x="1071.7" y="279.5" font-size="14" font-weight="normal" text-anchor="start" style="letter-spacing:0.5px">Montpellier</text>
<text x="970" y="365" font-size="12.5" font-weight="bold" text-anchor="start" style="letter-spacing:1.76px">Andorra</text>
<text x="1042" y="390.7" font-size="12" font-weight="normal" text-anchor="start" style="letter-spacing:0.29px">Girona</text>
<text x="993.7" y="428.5" font-size="14.5" font-weight="normal" text-anchor="start" style="letter-spacing:0.7px">Barcelona</text>
<text x="954.6" y="447" font-size="12" font-weight="normal" text-anchor="start" style="letter-spacing:0.4px">Tarragona</text>
<text x="483" y="300" font-size="12" font-weight="normal" text-anchor="start" style="">A Coruña</text>
<text x="505" y="336.5" font-size="12" font-weight="normal" text-anchor="start" style="letter-spacing:0.2px">Santiago de</text>
<text x="507" y="349.5" font-size="12" font-weight="normal" text-anchor="start" style="letter-spacing:0.2px">Compostela</text>
<text x="428" y="371" font-size="12" font-weight="normal" text-anchor="start" style="">Pontevedra</text>
<text x="513" y="367" font-size="12" font-weight="normal" text-anchor="start" style="letter-spacing:0.3px">Ourense</text>
<text x="481" y="394.7" font-size="12" font-weight="normal" text-anchor="start" style="">Vigo</text>
<text x="615" y="320.5" font-size="12" font-weight="normal" text-anchor="start" style="">Oviedo</text>
<text x="637" y="288.5" font-size="12" font-weight="normal" text-anchor="start" style="">Gijón</text>
<text x="705.3" y="291.8" font-size="12" font-weight="normal" text-anchor="start" style="letter-spacing:0.38px">Santander</text>
<text x="728.2" y="316.8" font-size="14.5" font-weight="normal" text-anchor="start" style="letter-spacing:1.12px">Bilbao</text>
<text x="784.4" y="322.3" font-size="12" font-weight="normal" text-anchor="start" style="letter-spacing:0.2px">San Sebastián</text>
<text x="749.7" y="352.9" font-size="12" font-weight="normal" text-anchor="start" style="letter-spacing:0.29px">Vitoria-Gasteiz</text>
<text x="633" y="351" font-size="12" font-weight="normal" text-anchor="start" style="">León</text>
<text x="662.5" y="413" font-size="12" font-weight="normal" text-anchor="start" style="letter-spacing:0.53px">Valladolid</text>
<text x="479" y="443.6" font-size="14.5" font-weight="normal" text-anchor="start" style="letter-spacing:1.03px">Porto</text>
<text x="612" y="457" font-size="12" font-weight="normal" text-anchor="start" style="letter-spacing:0.35px">Salamanca</text>
<text x="485.4" y="506.6" font-size="12" font-weight="normal" text-anchor="start" style="letter-spacing:0.37px">Coimbra</text>
<text x="455.4" y="552.8" font-size="19" font-weight="bold" text-anchor="start" style="letter-spacing:1.71px">Portugal</text>
<text x="714.8" y="491" font-size="14" font-weight="normal" text-anchor="start" style="">M</text>
<text x="705.6" y="528.1" font-size="12" font-weight="normal" text-anchor="start" style="letter-spacing:0.56px">Toledo</text>
<text x="722.8" y="566.4" font-size="24" font-weight="bold" text-anchor="start" style="letter-spacing:2.2px">Spain</text>
<text x="873" y="553" font-size="14.5" font-weight="normal" text-anchor="start" style="letter-spacing:0.89px">Valencia</text>
<text x="946" y="508.5" font-size="12" font-weight="normal" text-anchor="end" style="">Castellón</text>
<text x="950" y="519.6" font-size="12" font-weight="normal" text-anchor="end" style="">de la Plana</text>
<text x="449.4" y="599.4" font-size="16" font-weight="normal" text-anchor="start" style="letter-spacing:0.15px">Lisbon</text>
<text x="583.9" y="602.7" font-size="12" font-weight="normal" text-anchor="start" style="letter-spacing:0.4px">Badajoz</text>
<text x="891" y="613.5" font-size="12" font-weight="normal" text-anchor="start" style="letter-spacing:-0.08px">Benidorm</text>
<text x="875" y="645.8" font-size="12" font-weight="normal" text-anchor="start" style="letter-spacing:0.45px">Alicante</text>
<text x="662.9" y="653.6" font-size="12" font-weight="normal" text-anchor="start" style="letter-spacing:0.36px">Córdoba</text>
<text x="842" y="672" font-size="15" font-weight="normal" text-anchor="start" style="letter-spacing:0.83px">Murcia</text>
<text x="561.8" y="692.7" font-size="12" font-weight="normal" text-anchor="start" style="letter-spacing:0.2px">Huelva</text>
<text x="605" y="683" font-size="14.5" font-weight="normal" text-anchor="start" style="letter-spacing:0.81px">Seville</text>
<text x="721.5" y="697.5" font-size="12" font-weight="normal" text-anchor="start" style="letter-spacing:0.15px">Granada</text>
<text x="779.3" y="719" font-size="12" font-weight="normal" text-anchor="start" style="letter-spacing:0.21px">Almería</text>
<text x="495.8" y="704.6" font-size="11" font-weight="normal" text-anchor="start" style="letter-spacing:-0.16px">Albufeira</text>
<text x="520.4" y="727.7" font-size="12" font-weight="normal" text-anchor="start" style="letter-spacing:-0.1px">Faro</text>
<text x="678.4" y="724.9" font-size="15" font-weight="normal" text-anchor="start" style="letter-spacing:0.79px">Málaga</text>
<text x="626.3" y="773" font-size="13" font-weight="bold" text-anchor="start" style="letter-spacing:1.55px">Gibraltar</text>
<text x="576.7" y="788.5" font-size="15" font-weight="normal" text-anchor="start" style="letter-spacing:1.03px">Tangier</text>
<text x="1030.3" y="572" font-size="15" font-weight="normal" text-anchor="start" style="letter-spacing:0.46px">Palma</text>
<text x="1048" y="708.9" font-size="15" font-weight="normal" text-anchor="start" style="letter-spacing:0.99px">Algiers</text>
<text x="1073" y="725" font-size="14" font-weight="normal" text-anchor="middle" style="">مدينة الجزائر</text>
<text x="614" y="802.6" font-size="14" font-weight="normal" text-anchor="middle" style="">طنجة</text>
</g>
<g font-family="Liberation Sans, sans-serif" stroke-width="0.3">
<text x="997.3" y="86.5" font-size="22.5" font-weight="bold" fill="#2b2b2b" stroke="#2b2b2b" text-anchor="start" style="letter-spacing:3.7px">France</text>
<text x="833" y="105.2" font-size="12" font-weight="normal" fill="#484848" stroke="#484848" text-anchor="start" style="letter-spacing:0.18px">La Rochelle</text>
<text x="959.8" y="128.5" font-size="12" font-weight="normal" fill="#484848" stroke="#484848" text-anchor="start" style="letter-spacing:0.2px">Limoges</text>
<text x="1024" y="131.2" font-size="12" font-weight="normal" fill="#484848" stroke="#484848" text-anchor="start" style="letter-spacing:0.3px">Clermont-Ferrand</text>
<text x="1142.3" y="131.2" font-size="14" font-weight="bold" fill="#333" stroke="#333" text-anchor="start" style="">Ly</text>
<text x="867.5" y="197.6" font-size="12" font-weight="normal" fill="#484848" stroke="#484848" text-anchor="start" style="letter-spacing:0.28px">Bordeaux</text>
<text x="960.4" y="280.8" font-size="15" font-weight="normal" fill="#383838" stroke="#383838" text-anchor="start" style="letter-spacing:0.95px">Toulouse</text>
<text x="1071.7" y="279.5" font-size="14" font-weight="normal" fill="#383838" stroke="#383838" text-anchor="start" style="letter-spacing:0.5px">Montpellier</text>
<text x="970" y="365" font-size="12.5" font-weight="bold" fill="#3a3a3a" stroke="#3a3a3a" text-anchor="start" style="letter-spacing:1.76px">Andorra</text>
<text x="1042" y="390.7" font-size="12" font-weight="normal" fill="#484848" stroke="#484848" text-anchor="start" style="letter-spacing:0.29px">Girona</text>
<text x="993.7" y="428.5" font-size="14.5" font-weight="normal" fill="#383838" stroke="#383838" text-anchor="start" style="letter-spacing:0.7px">Barcelona</text>
<text x="954.6" y="447" font-size="12" font-weight="normal" fill="#484848" stroke="#484848" text-anchor="start" style="letter-spacing:0.4px">Tarragona</text>
<text x="483" y="300" font-size="12" font-weight="normal" fill="#484848" stroke="#484848" text-anchor="start" style="">A Coruña</text>
<text x="505" y="336.5" font-size="12" font-weight="normal" fill="#484848" stroke="#484848" text-anchor="start" style="letter-spacing:0.2px">Santiago de</text>
<text x="507" y="349.5" font-size="12" font-weight="normal" fill="#484848" stroke="#484848" text-anchor="start" style="letter-spacing:0.2px">Compostela</text>
<text x="428" y="371" font-size="12" font-weight="normal" fill="#484848" stroke="#484848" text-anchor="start" style="">Pontevedra</text>
<text x="513" y="367" font-size="12" font-weight="normal" fill="#484848" stroke="#484848" text-anchor="start" style="letter-spacing:0.3px">Ourense</text>
<text x="481" y="394.7" font-size="12" font-weight="normal" fill="#484848" stroke="#484848" text-anchor="start" style="">Vigo</text>
<text x="615" y="320.5" font-size="12" font-weight="normal" fill="#484848" stroke="#484848" text-anchor="start" style="">Oviedo</text>
<text x="637" y="288.5" font-size="12" font-weight="normal" fill="#484848" stroke="#484848" text-anchor="start" style="">Gijón</text>
<text x="705.3" y="291.8" font-size="12" font-weight="normal" fill="#484848" stroke="#484848" text-anchor="start" style="letter-spacing:0.38px">Santander</text>
<text x="728.2" y="316.8" font-size="14.5" font-weight="normal" fill="#383838" stroke="#383838" text-anchor="start" style="letter-spacing:1.12px">Bilbao</text>
<text x="784.4" y="322.3" font-size="12" font-weight="normal" fill="#484848" stroke="#484848" text-anchor="start" style="letter-spacing:0.2px">San Sebastián</text>
<text x="749.7" y="352.9" font-size="12" font-weight="normal" fill="#484848" stroke="#484848" text-anchor="start" style="letter-spacing:0.29px">Vitoria-Gasteiz</text>
<text x="633" y="351" font-size="12" font-weight="normal" fill="#484848" stroke="#484848" text-anchor="start" style="">León</text>
<text x="662.5" y="413" font-size="12" font-weight="normal" fill="#484848" stroke="#484848" text-anchor="start" style="letter-spacing:0.53px">Valladolid</text>
<text x="479" y="443.6" font-size="14.5" font-weight="normal" fill="#383838" stroke="#383838" text-anchor="start" style="letter-spacing:1.03px">Porto</text>
<text x="612" y="457" font-size="12" font-weight="normal" fill="#484848" stroke="#484848" text-anchor="start" style="letter-spacing:0.35px">Salamanca</text>
<text x="485.4" y="506.6" font-size="12" font-weight="normal" fill="#484848" stroke="#484848" text-anchor="start" style="letter-spacing:0.37px">Coimbra</text>
<text x="455.4" y="552.8" font-size="19" font-weight="bold" fill="#333" stroke="#333" text-anchor="start" style="letter-spacing:1.71px">Portugal</text>
<text x="714.8" y="491" font-size="14" font-weight="normal" fill="#383838" stroke="#383838" text-anchor="start" style="">M</text>
<text x="705.6" y="528.1" font-size="12" font-weight="normal" fill="#484848" stroke="#484848" text-anchor="start" style="letter-spacing:0.56px">Toledo</text>
<text x="722.8" y="566.4" font-size="24" font-weight="bold" fill="#333" stroke="#333" text-anchor="start" style="letter-spacing:2.2px">Spain</text>
<text x="873" y="553" font-size="14.5" font-weight="normal" fill="#383838" stroke="#383838" text-anchor="start" style="letter-spacing:0.89px">Valencia</text>
<text x="946" y="508.5" font-size="12" font-weight="normal" fill="#484848" stroke="#484848" text-anchor="end" style="">Castellón</text>
<text x="950" y="519.6" font-size="12" font-weight="normal" fill="#484848" stroke="#484848" text-anchor="end" style="">de la Plana</text>
<text x="449.4" y="599.4" font-size="16" font-weight="normal" fill="#383838" stroke="#383838" text-anchor="start" style="letter-spacing:0.15px">Lisbon</text>
<text x="583.9" y="602.7" font-size="12" font-weight="normal" fill="#484848" stroke="#484848" text-anchor="start" style="letter-spacing:0.4px">Badajoz</text>
<text x="891" y="613.5" font-size="12" font-weight="normal" fill="#484848" stroke="#484848" text-anchor="start" style="letter-spacing:-0.08px">Benidorm</text>
<text x="875" y="645.8" font-size="12" font-weight="normal" fill="#484848" stroke="#484848" text-anchor="start" style="letter-spacing:0.45px">Alicante</text>
<text x="662.9" y="653.6" font-size="12" font-weight="normal" fill="#484848" stroke="#484848" text-anchor="start" style="letter-spacing:0.36px">Córdoba</text>
<text x="842" y="672" font-size="15" font-weight="normal" fill="#383838" stroke="#383838" text-anchor="start" style="letter-spacing:0.83px">Murcia</text>
<text x="561.8" y="692.7" font-size="12" font-weight="normal" fill="#484848" stroke="#484848" text-anchor="start" style="letter-spacing:0.2px">Huelva</text>
<text x="605" y="683" font-size="14.5" font-weight="normal" fill="#383838" stroke="#383838" text-anchor="start" style="letter-spacing:0.81px">Seville</text>
<text x="721.5" y="697.5" font-size="12" font-weight="normal" fill="#484848" stroke="#484848" text-anchor="start" style="letter-spacing:0.15px">Granada</text>
<text x="779.3" y="719" font-size="12" font-weight="normal" fill="#484848" stroke="#484848" text-anchor="start" style="letter-spacing:0.21px">Almería</text>
<text x="495.8" y="704.6" font-size="11" font-weight="normal" fill="#777" stroke="#777" text-anchor="start" style="letter-spacing:-0.16px">Albufeira</text>
<text x="520.4" y="727.7" font-size="12" font-weight="normal" fill="#484848" stroke="#484848" text-anchor="start" style="letter-spacing:-0.1px">Faro</text>
<text x="678.4" y="724.9" font-size="15" font-weight="normal" fill="#383838" stroke="#383838" text-anchor="start" style="letter-spacing:0.79px">Málaga</text>
<text x="626.3" y="773" font-size="13" font-weight="bold" fill="#383838" stroke="#383838" text-anchor="start" style="letter-spacing:1.55px">Gibraltar</text>
<text x="576.7" y="788.5" font-size="15" font-weight="normal" fill="#383838" stroke="#383838" text-anchor="start" style="letter-spacing:1.03px">Tangier</text>
<text x="1030.3" y="572" font-size="15" font-weight="normal" fill="#383838" stroke="#383838" text-anchor="start" style="letter-spacing:0.46px">Palma</text>
<text x="1048" y="708.9" font-size="15" font-weight="normal" fill="#383838" stroke="#383838" text-anchor="start" style="letter-spacing:0.99px">Algiers</text>
<text x="1073" y="725" font-size="14" font-weight="normal" fill="#484848" stroke="#484848" text-anchor="middle" style="">مدينة الجزائر</text>
<text x="614" y="802.6" font-size="14" font-weight="normal" fill="#484848" stroke="#484848" text-anchor="middle" style="">طنجة</text>
</g>
<defs><path id="arc1" d="M672,211 Q709,191 748,208"/></defs>
<text font-family="Liberation Sans, sans-serif" font-size="11.4" fill="#5f93d8"><textPath href="#arc1">Bay of Biscay</textPath></text>
<text x="730.5" y="776.5" font-family="Liberation Sans, sans-serif" font-size="11.5" fill="#5f93d8" transform="rotate(11 730.5 776.5)">Alboran Sea</text>
<text x="988.5" y="538" font-family="Liberation Sans, sans-serif" font-size="12" fill="#5f93d8" transform="rotate(-43.5 988.5 538)">Balearic Sea</text>
<defs><path id="mk" d="M0,33.2 L-1.2,27 C-2.2,23 -3.5,19.5 -5.8,15.5 C-8.8,10.5 -10.9,6 -10.9,0 A10.9,10.9 0 1 1 10.9,0 C10.9,6 8.8,10.5 5.8,15.5 C3.5,19.5 2.2,23 1.2,27 Z"/></defs>
<use href="#mk" x="801" y="334" fill="#ffa400" stroke="#000" stroke-width="2.4" stroke-linejoin="round"/>
<circle cx="801" cy="334" r="2.4" fill="none" stroke="#000" stroke-width="1.8"/>
<use href="#mk" x="552" y="296" fill="#ffa400" stroke="#000" stroke-width="2.4" stroke-linejoin="round"/>
<circle cx="552" cy="296" r="2.4" fill="none" stroke="#000" stroke-width="1.8"/>
<use href="#mk" x="549" y="296" fill="#ffa400" stroke="#000" stroke-width="2.4" stroke-linejoin="round"/>
<circle cx="549" cy="296" r="2.4" fill="none" stroke="#000" stroke-width="1.8"/>
<use href="#mk" x="502" y="306" fill="#ffa400" stroke="#000" stroke-width="2.4" stroke-linejoin="round"/>
<circle cx="502" cy="306" r="2.4" fill="none" stroke="#000" stroke-width="1.8"/>
<use href="#mk" x="497.4" y="335.5" fill="#ffa400" stroke="#000" stroke-width="2.4" stroke-linejoin="round"/>
<circle cx="497.4" cy="335.5" r="2.4" fill="none" stroke="#000" stroke-width="1.8"/>
<use href="#mk" x="643.3" y="261" fill="#ffa400" stroke="#000" stroke-width="2.4" stroke-linejoin="round"/>
<circle cx="643.3" cy="261" r="2.4" fill="none" stroke="#000" stroke-width="1.8"/>
<use href="#mk" x="634" y="273.5" fill="#ffa400" stroke="#000" stroke-width="2.4" stroke-linejoin="round"/>
<circle cx="634" cy="273.5" r="2.4" fill="none" stroke="#000" stroke-width="1.8"/>
<use href="#mk" x="648" y="324" fill="#ffa400" stroke="#000" stroke-width="2.4" stroke-linejoin="round"/>
<circle cx="648" cy="324" r="2.4" fill="none" stroke="#000" stroke-width="1.8"/>
<use href="#mk" x="735" y="265.5" fill="#ffa400" stroke="#000" stroke-width="2.4" stroke-linejoin="round"/>
<circle cx="735" cy="265.5" r="2.4" fill="none" stroke="#000" stroke-width="1.8"/>
<use href="#mk" x="688" y="388" fill="#ffa400" stroke="#000" stroke-width="2.4" stroke-linejoin="round"/>
<circle cx="688" cy="388" r="2.4" fill="none" stroke="#000" stroke-width="1.8"/>
<use href="#mk" x="643" y="432" fill="#ffa400" stroke="#000" stroke-width="2.4" stroke-linejoin="round"/>
<circle cx="643" cy="432" r="2.4" fill="none" stroke="#000" stroke-width="1.8"/>
<use href="#mk" x="664.6" y="493" fill="#ffa400" stroke="#000" stroke-width="2.4" stroke-linejoin="round"/>
<circle cx="664.6" cy="493" r="2.4" fill="none" stroke="#000" stroke-width="1.8"/>
<use href="#mk" x="609" y="528" fill="#ffa400" stroke="#000" stroke-width="2.4" stroke-linejoin="round"/>
<circle cx="609" cy="528" r="2.4" fill="none" stroke="#000" stroke-width="1.8"/>
<use href="#mk" x="610" y="562.5" fill="#ffa400" stroke="#000" stroke-width="2.4" stroke-linejoin="round"/>
<circle cx="610" cy="562.5" r="2.4" fill="none" stroke="#000" stroke-width="1.8"/>
<use href="#mk" x="606.6" y="594" fill="#ffa400" stroke="#000" stroke-width="2.4" stroke-linejoin="round"/>
<circle cx="606.6" cy="594" r="2.4" fill="none" stroke="#000" stroke-width="1.8"/>
<use href="#mk" x="627.5" y="659.5" fill="#ffa400" stroke="#000" stroke-width="2.4" stroke-linejoin="round"/>
<circle cx="627.5" cy="659.5" r="2.4" fill="none" stroke="#000" stroke-width="1.8"/>
<use href="#mk" x="736.3" y="635" fill="#ffa400" stroke="#000" stroke-width="2.4" stroke-linejoin="round"/>
<circle cx="736.3" cy="635" r="2.4" fill="none" stroke="#000" stroke-width="1.8"/>
<use href="#mk" x="801" y="693" fill="#ffa400" stroke="#000" stroke-width="2.4" stroke-linejoin="round"/>
<circle cx="801" cy="693" r="2.4" fill="none" stroke="#000" stroke-width="1.8"/>
<use href="#mk" x="743" y="458.5" fill="#000" stroke="#000" stroke-width="2.4" stroke-linejoin="round"/>
<circle cx="743" cy="458.5" r="2.4" fill="none" stroke="#000" stroke-width="1.8"/>
<use href="#mk" x="919" y="496" fill="#ffa400" stroke="#000" stroke-width="2.4" stroke-linejoin="round"/>
<circle cx="919" cy="496" r="2.4" fill="none" stroke="#000" stroke-width="1.8"/>
<use href="#mk" x="729" y="560" fill="#0000ff" stroke="#000" stroke-width="2.4" stroke-linejoin="round"/>
<circle cx="729" cy="560" r="2.4" fill="none" stroke="#000" stroke-width="1.8"/>
<use href="#mk" x="830" y="558.5" fill="#0000ff" stroke="#000" stroke-width="2.4" stroke-linejoin="round"/>
<circle cx="830" cy="558.5" r="2.4" fill="none" stroke="#000" stroke-width="1.8"/>
<use href="#mk" x="904.7" y="528" fill="#0000ff" stroke="#000" stroke-width="2.4" stroke-linejoin="round"/>
<circle cx="904.7" cy="528" r="2.4" fill="none" stroke="#000" stroke-width="1.8"/>
</svg>

<div class="abs" style="left:0;top:0;width:407px;height:1px;background:#c9c9c9"></div>
<div class="abs" style="left:611px;top:0;width:321px;height:1px;background:#c9c9c9"></div>
<!-- map type -->
<div class="abs" style="left:11.4px;top:12px;width:207.6px;height:43.2px;background:#fff;border-radius:2px;box-shadow:0 1px 4px -1px rgba(0,0,0,.3)"></div>
<div class="abs" style="left:98px;top:12px;width:1px;height:43px;background:#ebebeb"></div>
<div class="abs" style="left:37px;top:23.5px;font-size:18.5px;color:#000;-webkit-text-stroke:0.35px #000">Map</div>
<div class="abs" style="left:125px;top:23.5px;font-size:18.5px;color:#565656;letter-spacing:0.3px">Satellite</div>

<!-- popups -->
<svg class="abs" style="left:0;top:0" width="932" height="748" viewBox="221 69 932 748">
 <polygon points="857,433 878,433 867.6,457" fill="#fff" stroke="#aaa" stroke-width="1.6"/>
 <polygon points="819.5,518 840,518 829.4,543.3" fill="#fff" stroke="#aaa" stroke-width="1.6"/>
</svg>
<div class="pop" style="left:542.7px;top:295.7px;width:207.8px;height:69.3px">
 <div class="abs" style="left:16px;top:9px"><b>Claim:AC_01085_00423</b><br><b>Reason:</b><br><span class="o">Observations:</span></div>
 <svg class="abs" style="left:183px;top:11px" width="12" height="12"><path d="M1.5,1.5 L10.5,10.5 M10.5,1.5 L1.5,10.5" stroke="#999" stroke-width="1.8"/></svg>
</div>
<svg class="abs" style="left:0;top:0" width="932" height="748" viewBox="221 69 932 748">
 <polygon points="858.5,432 876.5,432 867.6,452" fill="#fff"/>
</svg>
<div class="pop" style="left:505px;top:380.7px;width:207.5px;height:69.3px">
 <div class="abs" style="left:16px;top:9px"><b>Claim:AC_01106_00440</b><br><b>Reason: Reason</b><br><span class="o">Observations: Comment</span></div>
 <svg class="abs" style="left:183px;top:11px" width="12" height="12"><path d="M1.5,1.5 L10.5,10.5 M10.5,1.5 L1.5,10.5" stroke="#999" stroke-width="1.8"/></svg>
</div>
<svg class="abs" style="left:0;top:0" width="932" height="748" viewBox="221 69 932 748">
 <polygon points="820.8,517 838.7,517 829.4,539" fill="#fff"/>
</svg>
<!-- google logo -->
<div class="abs" style="left:7.5px;top:727.5px;font-size:22px;letter-spacing:-0.3px;-webkit-text-stroke:0.5px currentColor;text-shadow:0 0 2px #fff,0 0 2px #fff"><span style="color:#4285f4">G</span><span style="color:#ea4335">o</span><span style="color:#fbbc05">o</span><span style="color:#4285f4">g</span><span style="color:#34a853">l</span><span style="color:#ea4335">e</span></div>
</div>
</body></html>
